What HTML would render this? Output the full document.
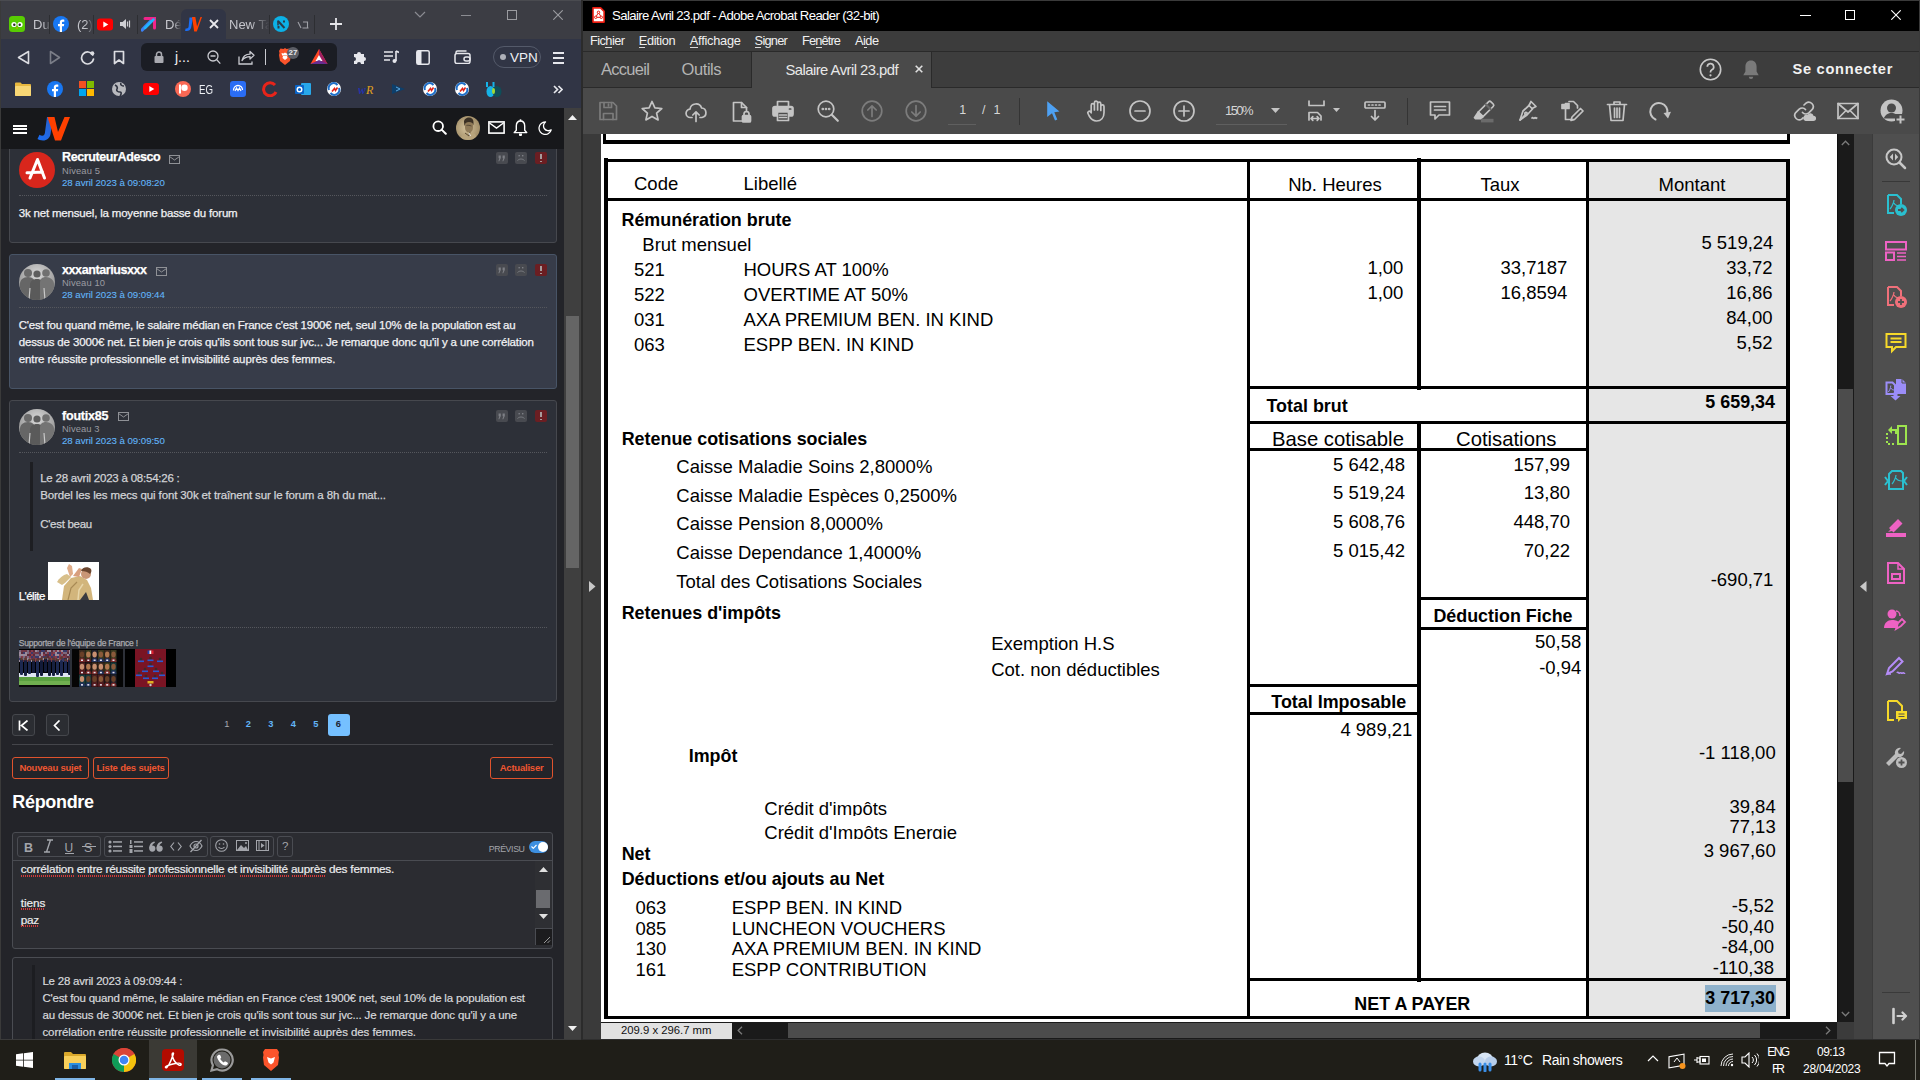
<!DOCTYPE html><html><head><meta charset="utf-8"><style>
html,body{margin:0;padding:0;}
body{width:1920px;height:1080px;overflow:hidden;position:relative;background:#222;font-family:"Liberation Sans",sans-serif;}
div,svg,span{position:absolute;box-sizing:border-box;}
</style></head><body><div style="left:581px;top:0px;width:2px;height:1040px;background:#2b2b2b;"></div>
<div style="left:583px;top:0px;width:1337px;height:31px;background:#000;"></div>
<div style="left:583px;top:31px;width:1337px;height:20px;background:#3c3c3c;"></div>
<div style="left:583px;top:51px;width:1337px;height:1px;background:#2a2a2a;"></div>
<div style="left:583px;top:52px;width:1337px;height:36px;background:#3d3d3d;"></div>
<div style="left:752px;top:52px;width:180px;height:36px;background:#4a4a4a;"></div>
<div style="left:751px;top:52px;width:1px;height:36px;background:#2a2a2a;"></div>
<div style="left:931px;top:52px;width:1px;height:36px;background:#2a2a2a;"></div>
<div style="left:583px;top:87px;width:168px;height:1px;background:#2a2a2a;"></div>
<div style="left:932px;top:87px;width:988px;height:1px;background:#2a2a2a;"></div>
<div style="left:583px;top:88px;width:1337px;height:46px;background:#4a4a4a;"></div>
<div style="left:583px;top:134px;width:18px;height:906px;background:#3a3a3a;"></div>
<svg style="left:592px;top:7px;" width="13" height="16" viewBox="0 0 13 16"><path d="M1 0.9h7.6l3.5 3.5v10.7H1z" fill="#fff" stroke="#ea1c10" stroke-width="1.6" stroke-linejoin="round"/><g fill="none" stroke="#ea1c10" stroke-width="1"><circle cx="6.5" cy="5.3" r="1.2"/><circle cx="3.7" cy="10.3" r="1.2"/><circle cx="9.3" cy="10.3" r="1.2"/><path d="M6 6.4L4.3 9.2M7 6.4l1.7 2.8M4.9 10.3h3.2"/></g></svg>
<div style="left:612px;top:9.13px;font-size:13.2px;line-height:13.2px;color:#fff;font-weight:400;letter-spacing:-0.624px;white-space:pre;">Salaire Avril 23.pdf - Adobe Acrobat Reader (32-bit)</div>
<div style="left:1800px;top:15px;width:11px;height:1px;background:#fff;"></div>
<div style="left:1845px;top:10px;width:10px;height:10px;border:1px solid #fff"></div>
<svg style="left:1891px;top:10px;" width="10" height="10" viewBox="0 0 10 10"><path d="M0.3 0.3L9.7 9.7M9.7 0.3L0.3 9.7" stroke="#fff" stroke-width="1.1"/></svg>
<div style="left:590px;top:35.16px;font-size:12.8px;line-height:12.8px;color:#f0f0f0;font-weight:400;letter-spacing:-0.568px;white-space:pre;">Fichier</div>
<div style="left:638.8px;top:35.16px;font-size:12.8px;line-height:12.8px;color:#f0f0f0;font-weight:400;letter-spacing:-0.39px;white-space:pre;">Edition</div>
<div style="left:689.8px;top:35.16px;font-size:12.8px;line-height:12.8px;color:#f0f0f0;font-weight:400;letter-spacing:-0.242px;white-space:pre;">Affichage</div>
<div style="left:754.6px;top:35.16px;font-size:12.8px;line-height:12.8px;color:#f0f0f0;font-weight:400;letter-spacing:-0.74px;white-space:pre;">Signer</div>
<div style="left:802px;top:35.16px;font-size:12.8px;line-height:12.8px;color:#f0f0f0;font-weight:400;letter-spacing:-0.852px;white-space:pre;">Fenêtre</div>
<div style="left:855px;top:35.16px;font-size:12.8px;line-height:12.8px;color:#f0f0f0;font-weight:400;letter-spacing:-0.54px;white-space:pre;">Aide</div>
<div style="left:605px;top:47px;width:7px;height:1px;background:#d8d8d8;"></div>
<div style="left:639px;top:47px;width:6px;height:1px;background:#d8d8d8;"></div>
<div style="left:690px;top:47px;width:8px;height:1px;background:#d8d8d8;"></div>
<div style="left:755px;top:47px;width:6px;height:1px;background:#d8d8d8;"></div>
<div style="left:816px;top:47px;width:6px;height:1px;background:#d8d8d8;"></div>
<div style="left:864px;top:47px;width:3px;height:1px;background:#d8d8d8;"></div>
<div style="left:601px;top:61.03px;font-size:16.5px;line-height:16.5px;color:#b4b4b4;font-weight:400;letter-spacing:-0.732px;white-space:pre;">Accueil</div>
<div style="left:681.6px;top:61.03px;font-size:16.5px;line-height:16.5px;color:#b4b4b4;font-weight:400;letter-spacing:-0.435px;white-space:pre;">Outils</div>
<div style="left:785.4px;top:62.97px;font-size:14.8px;line-height:14.8px;color:#e8e8e8;font-weight:400;letter-spacing:-0.518px;white-space:pre;">Salaire Avril 23.pdf</div>
<svg style="left:915px;top:65px;" width="8" height="8" viewBox="0 0 8 8"><path d="M0.7 0.7L7.3 7.3M7.3 0.7L0.7 7.3" stroke="#e0e0e0" stroke-width="1.6"/></svg>
<svg style="left:1699px;top:57.5px;" width="23" height="23" viewBox="0 0 23 23"><circle cx="11.5" cy="11.5" r="10.2" fill="none" stroke="#c8c8c8" stroke-width="1.6"/><path d="M8.3 8.8a3.2 3.2 0 1 1 4.6 2.9c-.9.5-1.4 1-1.4 2.2v.6" fill="none" stroke="#c8c8c8" stroke-width="1.7"/><circle cx="11.5" cy="17.3" r="1.1" fill="#c8c8c8"/></svg>
<svg style="left:1742px;top:59px;" width="18" height="21" viewBox="0 0 18 21"><path d="M9 1.5c-3.6 0-5.6 2.6-5.6 6.2v4.8L1.3 16.2h15.4l-2.1-3.7V7.7C14.6 4.1 12.6 1.5 9 1.5z" fill="#7a7a7a"/><path d="M6.8 17.8a2.2 2.2 0 0 0 4.4 0z" fill="#7a7a7a"/></svg>
<div style="left:1792.4px;top:62.24px;font-size:14.6px;line-height:14.6px;color:#f2f2f2;font-weight:700;letter-spacing:0.755px;white-space:pre;">Se connecter</div>
<svg style="left:596.0px;top:99.0px;" width="24" height="24" viewBox="0 0 24 24"><g fill="none" stroke="#7c7c7c" stroke-width="1.7" stroke-linecap="round" stroke-linejoin="round"><path d="M4 3.5h13l3.5 3.5v13.5H4z"/><path d="M8 3.5v5h7.5v-5"/><path d="M12.5 5v2"/><path d="M7.5 20.5v-6h9.5v6"/></g></svg>
<svg style="left:640.0px;top:99.0px;" width="24" height="24" viewBox="0 0 24 24"><g fill="none" stroke="#c4c4c4" stroke-width="1.7" stroke-linecap="round" stroke-linejoin="round"><path d="M12 2.5l2.9 6.3 6.9.7-5.2 4.6 1.5 6.8L12 17.4l-6.1 3.5 1.5-6.8L2.2 9.5l6.9-.7z"/></g></svg>
<svg style="left:684.0px;top:99.5px;" width="24" height="24" viewBox="0 0 24 24"><g fill="none" stroke="#c4c4c4" stroke-width="1.7" stroke-linecap="round" stroke-linejoin="round"><path d="M8 17.5H6.5a4.2 4.2 0 0 1-.5-8.4A6 6 0 0 1 17.6 8a4.8 4.8 0 0 1 .4 9.5H16"/><path d="M12 21.5v-9.5M8.8 15l3.2-3.2 3.2 3.2"/></g></svg>
<svg style="left:728.5px;top:99.5px;" width="24" height="24" viewBox="0 0 24 24"><g fill="none" stroke="#c4c4c4" stroke-width="1.7" stroke-linecap="round" stroke-linejoin="round"><path d="M12.5 21H4.5V2.5h8l5 5v4"/><path d="M12.5 2.5v5h5"/><rect x="13.5" y="15.5" width="8" height="6.5" rx="1" fill="#c4c4c4"/><path d="M15 15.5v-1.5a2.5 2.5 0 0 1 5 0v1.5"/></g></svg>
<svg style="left:771.0px;top:98.5px;" width="24" height="24" viewBox="0 0 24 24"><g fill="none" stroke="#c4c4c4" stroke-width="1.7" stroke-linecap="round" stroke-linejoin="round"><path d="M6.5 7.5V2.5h11v5"/><rect x="2" y="7.5" width="20" height="9.5" rx="2" fill="#c4c4c4"/><rect x="6.5" y="13" width="11" height="8.5" fill="#4b4b4b"/><path d="M8.5 16h7M8.5 18.5h7"/><path d="M18.5 10h1.2" stroke="#4b4b4b"/></g></svg>
<svg style="left:816.0px;top:99.3px;" width="24" height="24" viewBox="0 0 24 24"><g fill="none" stroke="#c4c4c4" stroke-width="1.7" stroke-linecap="round" stroke-linejoin="round"><circle cx="10" cy="10" r="7.8"/><path d="M15.8 15.8l6 6" stroke-width="2.2"/><circle cx="6.8" cy="10" r="0.5" fill="#c4c4c4"/><circle cx="10" cy="10" r="0.5" fill="#c4c4c4"/><circle cx="13.2" cy="10" r="0.5" fill="#c4c4c4"/></g></svg>
<svg style="left:860.0px;top:98.7px;" width="24" height="24" viewBox="0 0 24 24"><g fill="none" stroke="#7c7c7c" stroke-width="1.7" stroke-linecap="round" stroke-linejoin="round"><circle cx="12" cy="12" r="9.8"/><path d="M12 17.5V6.8M7.8 11l4.2-4.2 4.2 4.2"/></g></svg>
<svg style="left:904.0px;top:98.7px;" width="24" height="24" viewBox="0 0 24 24"><g fill="none" stroke="#7c7c7c" stroke-width="1.7" stroke-linecap="round" stroke-linejoin="round"><circle cx="12" cy="12" r="9.8"/><path d="M12 6.5v10.7M7.8 13l4.2 4.2 4.2-4.2"/></g></svg>
<div style="left:959.2px;top:104.32px;font-size:12.5px;line-height:12.5px;color:#d6d6d6;font-weight:400;white-space:pre;">1</div>
<div style="left:948px;top:124px;width:28px;height:1px;background:#5f5f5f;"></div>
<div style="left:982px;top:104.32px;font-size:12.5px;line-height:12.5px;color:#d6d6d6;font-weight:400;white-space:pre;">/</div>
<div style="left:993.5px;top:104.32px;font-size:12.5px;line-height:12.5px;color:#d6d6d6;font-weight:400;white-space:pre;">1</div>
<div style="left:1019px;top:98px;width:1px;height:27px;background:#343434;"></div>
<svg style="left:1046px;top:100px;" width="15" height="22" viewBox="0 0 15 22"><path d="M1.2 1.2L13.5 11.5 8.3 12.2 11.3 19.5 9 20.6 6 13.2 1.2 17z" fill="#4ea1f3"/></svg>
<svg style="left:1084.0px;top:99.0px;" width="24" height="24" viewBox="0 0 24 24"><g fill="none" stroke="#c4c4c4" stroke-width="1.7" stroke-linecap="round" stroke-linejoin="round"><path d="M7.2 13V6.2a1.6 1.6 0 0 1 3.2 0V11M10.4 11V3.8a1.6 1.6 0 0 1 3.2 0V11M13.6 11V4.8a1.6 1.6 0 0 1 3.2 0V11.5M16.8 11.5V7.5a1.6 1.6 0 0 1 3.2 0v6.3c0 5-3 8.2-7.5 8.2-3.7 0-5.4-1.8-7.3-5L4 14.5a1.5 1.5 0 0 1 2.6-1.5l.6.8"/></g></svg>
<svg style="left:1128.0px;top:98.5px;" width="24" height="24" viewBox="0 0 24 24"><g fill="none" stroke="#c4c4c4" stroke-width="1.7" stroke-linecap="round" stroke-linejoin="round"><circle cx="12" cy="12" r="10"/><path d="M7 12h10"/></g></svg>
<svg style="left:1172.0px;top:98.5px;" width="24" height="24" viewBox="0 0 24 24"><g fill="none" stroke="#c4c4c4" stroke-width="1.7" stroke-linecap="round" stroke-linejoin="round"><circle cx="12" cy="12" r="10"/><path d="M7 12h10M12 7v10"/></g></svg>
<div style="left:1225px;top:103.90px;font-size:13px;line-height:13px;color:#d6d6d6;font-weight:400;letter-spacing:-1.549px;white-space:pre;">150%</div>
<svg style="left:1271px;top:108px;" width="9" height="5" viewBox="0 0 9 5"><path d="M0 0h9L4.5 5z" fill="#c4c4c4"/></svg>
<div style="left:1216px;top:124px;width:71px;height:1px;background:#5f5f5f;"></div>
<svg style="left:1306.0px;top:99.0px;" width="24" height="24" viewBox="0 0 24 24"><g fill="none" stroke="#c4c4c4" stroke-width="1.7" stroke-linecap="round" stroke-linejoin="round"><path d="M3 2v4.5h15V2"/><path d="M3 21v-7.5h8.5l3.5 3.5v4"/><path d="M5 19.5h8M6.8 17.7l-1.8 1.8 1.8 1.8M11.2 17.7l1.8 1.8-1.8 1.8"/></g></svg>
<svg style="left:1333px;top:108px;" width="7" height="4" viewBox="0 0 7 4"><path d="M0 0h7L3.5 4z" fill="#c4c4c4"/></svg>
<svg style="left:1363.0px;top:99.0px;" width="24" height="24" viewBox="0 0 24 24"><g fill="none" stroke="#c4c4c4" stroke-width="1.7" stroke-linecap="round" stroke-linejoin="round"><rect x="2" y="3" width="20" height="6" rx="1"/><path d="M5.5 6h1M9 6h1M12.5 6h1M16 6h1"/><path d="M12 11.5v9.5M8.5 17.5l3.5 3.5 3.5-3.5"/></g></svg>
<div style="left:1407px;top:98px;width:1px;height:27px;background:#343434;"></div>
<svg style="left:1428.0px;top:99.0px;" width="24" height="24" viewBox="0 0 24 24"><g fill="none" stroke="#c4c4c4" stroke-width="1.7" stroke-linecap="round" stroke-linejoin="round"><path d="M2.5 3h19v13H11l-4 4v-4H2.5z"/><path d="M6.5 7.5h11M6.5 11h11"/></g></svg>
<svg style="left:1471.5px;top:99.0px;" width="24" height="24" viewBox="0 0 24 24"><g fill="none" stroke="#c4c4c4" stroke-width="1.7" stroke-linecap="round" stroke-linejoin="round"><path d="M16.5 2.8a1.8 1.8 0 0 1 2.5 0l2.2 2.2a1.8 1.8 0 0 1 0 2.5L11 17.7 6.3 13z"/><path d="M6.3 13l4.7 4.7-2 2H3.5l-1-1z" fill="#c4c4c4"/><rect x="9" y="19.8" width="12.5" height="3.6" fill="#6b6b6b" stroke="none"/><path d="M14 5.5l4.5 4.5" stroke="#6b6b6b" stroke-width="2.2"/></g></svg>
<svg style="left:1515.5px;top:98.5px;" width="24" height="24" viewBox="0 0 24 24"><g fill="none" stroke="#c4c4c4" stroke-width="1.7" stroke-linecap="round" stroke-linejoin="round"><path d="M4 21l3-9 6-5.5 3.5 3.5-5.5 6z"/><path d="M13 6.5l2-4 5 5-4 2"/><path d="M4 21l5-5"/><circle cx="10" cy="14.5" r="1.2"/><path d="M16 19c1-1.5 1.5 1.5 2.5 0s1.2 1.2 2.2 0"/></g></svg>
<svg style="left:1560.0px;top:99.3px;" width="24" height="24" viewBox="0 0 24 24"><g fill="none" stroke="#c4c4c4" stroke-width="1.7" stroke-linecap="round" stroke-linejoin="round"><path d="M9 4.5H5.5v16h8"/><path d="M9 2.5h4.5l4 4V9"/><rect x="2" y="5.5" width="7" height="4" fill="#c4c4c4"/><path d="M11 21.5l1-3.5 8.5-8.5 2.5 2.5-8.5 8.5z"/></g></svg>
<svg style="left:1604.7px;top:99.0px;" width="24" height="24" viewBox="0 0 24 24"><g fill="none" stroke="#c4c4c4" stroke-width="1.7" stroke-linecap="round" stroke-linejoin="round"><path d="M2.5 5.5h19M9 5.5V3h6v2.5M4.5 5.5l1.5 16h12l1.5-16M9.5 9v9.5M12 9v9.5M14.5 9v9.5"/></g></svg>
<svg style="left:1648.0px;top:99.0px;" width="24" height="24" viewBox="0 0 24 24"><g fill="none" stroke="#c4c4c4" stroke-width="2" stroke-linecap="round" stroke-linejoin="round"><path d="M7.5 20.5A8.6 8.6 0 1 1 19.3 14.5"/><path d="M15.5 14l7.5-1.2-3 6.7z" fill="#c4c4c4" stroke="none"/></g></svg>
<svg style="left:1792.0px;top:99.0px;" width="24" height="24" viewBox="0 0 24 24"><g fill="none" stroke="#c4c4c4" stroke-width="1.7" stroke-linecap="round" stroke-linejoin="round"><path d="M10.5 13.5a4.5 4.5 0 0 0 6.3.4l3.5-3.5a4.5 4.5 0 0 0-6.3-6.3L12 6"/><path d="M13.5 10.5a4.5 4.5 0 0 0-6.3-.4l-3.5 3.5a4.5 4.5 0 0 0 6.3 6.3l1-1"/><path d="M13.5 22h8a2.6 2.6 0 0 0 0-5.2 3.2 3.2 0 0 0-6-.8 2.4 2.4 0 0 0-2 6z" fill="#c4c4c4" stroke="none"/></g></svg>
<svg style="left:1836.0px;top:98.6px;" width="24" height="24" viewBox="0 0 24 24"><g fill="none" stroke="#c4c4c4" stroke-width="1.7" stroke-linecap="round" stroke-linejoin="round"><rect x="2" y="4.5" width="20" height="15"/><path d="M2 4.5l10 8.5 10-8.5M2 19.5l7.5-7.5M22 19.5l-7.5-7.5"/></g></svg>
<svg style="left:1880px;top:99px;" width="26" height="25" viewBox="0 0 26 25"><circle cx="11.5" cy="11.5" r="11" fill="#c4c4c4"/><circle cx="11.5" cy="9" r="4.5" fill="#4b4b4b"/><path d="M3.8 19.5c1.5-4 4.5-5.5 7.7-5.5s6.2 1.5 7.7 5.5" fill="#4b4b4b"/><rect x="15" y="15" width="11" height="10" fill="#4b4b4b"/><path d="M20.5 16.5v8M16.5 20.5h8" stroke="#c4c4c4" stroke-width="2"/></svg>
<div style="left:1837px;top:134px;width:17px;height:888px;background:#1a1a1a;"></div>
<div style="left:1837px;top:134px;width:1px;height:888px;background:#0f0f0f;"></div>
<div style="left:1838px;top:389px;width:15px;height:393px;background:#4c4c4c;"></div>
<svg style="left:1841px;top:140px;" width="9" height="6" viewBox="0 0 9 6"><path d="M0.8 5L4.5 1.2 8.2 5" fill="none" stroke="#7a7a7a" stroke-width="1.3"/></svg>
<svg style="left:1841px;top:1011px;" width="9" height="6" viewBox="0 0 9 6"><path d="M0.8 1L4.5 4.8 8.2 1" fill="none" stroke="#7a7a7a" stroke-width="1.3"/></svg>
<div style="left:601px;top:1022px;width:1236px;height:18px;background:#1a1a1a;"></div>
<div style="left:601px;top:1023px;width:131px;height:16px;background:#e1e1e1;"></div>
<div style="left:621px;top:1025.43px;font-size:11.3px;line-height:11.3px;color:#111;font-weight:400;white-space:pre;">209.9 x 296.7 mm</div>
<div style="left:788px;top:1023px;width:972px;height:15px;background:#4c4c4c;"></div>
<svg style="left:737px;top:1026px;" width="6" height="9" viewBox="0 0 6 9"><path d="M5 0.8L1.2 4.5 5 8.2" fill="none" stroke="#7a7a7a" stroke-width="1.3"/></svg>
<svg style="left:1825px;top:1026px;" width="6" height="9" viewBox="0 0 6 9"><path d="M1 0.8L4.8 4.5 1 8.2" fill="none" stroke="#7a7a7a" stroke-width="1.3"/></svg>
<div style="left:1837px;top:1022px;width:17px;height:18px;background:#3b3b3b;"></div>
<div style="left:1854px;top:134px;width:18px;height:906px;background:#424242;"></div>
<div style="left:1872px;top:134px;width:1px;height:906px;background:#3b3b3b;"></div>
<div style="left:1873px;top:134px;width:47px;height:906px;background:#4f4f4f;"></div>
<div style="left:583px;top:1039px;width:1337px;height:1px;background:#2e2e2e;"></div>
<svg style="left:589px;top:581px;" width="7" height="11" viewBox="0 0 7 11"><path d="M0 0v11L6.5 5.5z" fill="#c8c8c8"/></svg>
<svg style="left:1860px;top:581px;" width="7" height="11" viewBox="0 0 7 11"><path d="M6.5 0v11L0 5.5z" fill="#c8c8c8"/></svg>
<svg style="left:1884px;top:147px;" width="24" height="24" viewBox="0 0 24 24"><circle cx="10" cy="10" r="7.5" fill="none" stroke="#c8c8c8" stroke-width="2"/><path d="M15.5 15.5l5.5 5.5" stroke="#c8c8c8" stroke-width="2.5" stroke-linecap="round"/><path d="M9 6.5v7L5.8 10zM11 6.5v7L14.2 10z" fill="#c8c8c8"/></svg>
<div style="left:1882px;top:181px;width:28px;height:1px;background:#383838;"></div>
<svg style="left:1884px;top:193px;" width="24" height="24" viewBox="0 0 24 24"><path d="M4 2h9l4 4v5" fill="none" stroke="#2ac0d0" stroke-width="2"/><path d="M10 20H4V2" fill="none" stroke="#2ac0d0" stroke-width="2"/><path d="M10 7c0 3-3 8-4 9M10 10c1 2 3 3 6 3" fill="none" stroke="#2ac0d0" stroke-width="1.2"/><circle cx="17" cy="17" r="6" fill="#2ac0d0"/><path d="M14 17h5M17.2 14.8l2.2 2.2-2.2 2.2" stroke="#505050" stroke-width="1.8" fill="none"/></svg>
<svg style="left:1884px;top:239px;" width="24" height="24" viewBox="0 0 24 24"><rect x="2" y="3" width="20" height="7.5" fill="none" stroke="#ee62c4" stroke-width="2"/><rect x="2" y="13.5" width="8" height="7.5" fill="none" stroke="#ee62c4" stroke-width="2"/><path d="M13 14h9M13 17.5h9M13 21h9" stroke="#ee62c4" stroke-width="1.3"/></svg>
<svg style="left:1884px;top:285px;" width="24" height="24" viewBox="0 0 24 24"><path d="M4 2h9l4 4v5" fill="none" stroke="#f0707a" stroke-width="2"/><path d="M10 20H4V2" fill="none" stroke="#f0707a" stroke-width="2"/><path d="M10 7c0 3-3 8-4 9M10 10c1 2 3 3 6 3" fill="none" stroke="#f0707a" stroke-width="1.2"/><circle cx="17" cy="17" r="6" fill="#f0707a"/><path d="M14 17h6M17 14v6" stroke="#505050" stroke-width="1.8"/></svg>
<svg style="left:1884px;top:331px;" width="24" height="24" viewBox="0 0 24 24"><path d="M2.5 3h19v13H12l-4 4v-4H2.5z" fill="none" stroke="#f6d92a" stroke-width="2"/><path d="M6.5 7.5h11M6.5 11h11" stroke="#f6d92a" stroke-width="1.8"/></svg>
<svg style="left:1884px;top:377px;" width="24" height="24" viewBox="0 0 24 24"><path d="M2.5 5.5h6l2.5 2.5v9H2.5z" fill="none" stroke="#9b8df8" stroke-width="2"/><path d="M12 2h6l4 4v11h-10z" fill="#9b8df8"/><path d="M18 2v4h4" fill="none" stroke="#4f4f4f" stroke-width="1"/><path d="M9.5 15.5h4v3.5h3l-5 4.5-5-4.5h3z" fill="#9b8df8"/><path d="M6.8 8.5c0 2.5-1.5 5.5-2.5 6.5M6.8 11c.8 1.5 2 2 3.5 2" fill="none" stroke="#9b8df8" stroke-width="1"/></svg>
<svg style="left:1884px;top:423px;" width="24" height="24" viewBox="0 0 24 24"><path d="M14 3h8v18h-8z" fill="none" stroke="#9ee54e" stroke-width="2"/><path d="M3 10v11h7M3 14v2" fill="none" stroke="#9ee54e" stroke-width="2" stroke-dasharray="2 2"/><path d="M4 7l4-4v8z" fill="#9ee54e"/><path d="M6 7h6v4" fill="none" stroke="#9ee54e" stroke-width="2"/></svg>
<svg style="left:1884px;top:469px;" width="24" height="24" viewBox="0 0 24 24"><path d="M5 5l3-3h9l2 2v16H5z" fill="none" stroke="#2ac0d0" stroke-width="2"/><path d="M1 8l3 4-3 4M23 8l-3 4 3 4" fill="none" stroke="#2ac0d0" stroke-width="2"/><path d="M12 6c0 3-3 8-4 9M12 9c1 2 3 3 6 3" fill="none" stroke="#2ac0d0" stroke-width="1.2"/></svg>
<svg style="left:1884px;top:515px;" width="24" height="24" viewBox="0 0 24 24"><path d="M4 17l2.5-2.5-1.5-1.5L14 4l4.5 4.5-9 9-1.5-1.5z" fill="#ee62c4"/><rect x="2" y="18" width="20" height="4" fill="#ee62c4"/></svg>
<svg style="left:1884px;top:561px;" width="24" height="24" viewBox="0 0 24 24"><path d="M4 2h10l6 6v14H4z" fill="none" stroke="#ee62c4" stroke-width="2"/><path d="M14 2v6h6" fill="none" stroke="#ee62c4" stroke-width="1.5"/><rect x="8" y="13" width="8" height="5" fill="none" stroke="#ee62c4" stroke-width="2"/></svg>
<svg style="left:1884px;top:607px;" width="24" height="24" viewBox="0 0 24 24"><circle cx="8" cy="7" r="4.5" fill="#ee62c4"/><path d="M0 21c0-5 3.5-8 8-8s6 1.5 6 1.5V21z" fill="#ee62c4"/><path d="M12 22l2-6 4-4 3 3-4 4z" fill="none" stroke="#ee62c4" stroke-width="1.8"/><path d="M12 4c2 0 4 2 4 5" fill="none" stroke="#ee62c4" stroke-width="1.5"/></svg>
<svg style="left:1884px;top:653px;" width="24" height="24" viewBox="0 0 24 24"><path d="M3 21l2-6 10-10 3.5 3.5-10 10z" fill="none" stroke="#b58cf8" stroke-width="2"/><path d="M3 21h4M13 20c1-2 2 1 3 0s1.5 1 2.5 0 1.5 1 2.5 0" fill="none" stroke="#b58cf8" stroke-width="1.6"/></svg>
<svg style="left:1884px;top:699px;" width="24" height="24" viewBox="0 0 24 24"><path d="M4 2h9l5 5v5" fill="none" stroke="#f6d92a" stroke-width="2"/><path d="M10 21H4V2" fill="none" stroke="#f6d92a" stroke-width="2"/><path d="M12 12h11v8h-6l-3 3v-3h-2z" fill="#f6d92a"/><path d="M14.5 15h6M14.5 17.5h6" stroke="#505050" stroke-width="1"/></svg>
<svg style="left:1884px;top:745px;" width="24" height="24" viewBox="0 0 24 24"><path d="M2 18l9-9a5 5 0 0 1 6-6l-3 3 .5 2.5L17 9l3-3a5 5 0 0 1-6 6l-9 9z" fill="#bdbdbd"/><circle cx="17.5" cy="17.5" r="5.5" fill="#bdbdbd"/><path d="M14.5 17.5h6M17.5 14.5v6" stroke="#505050" stroke-width="1.8"/></svg>
<div style="left:1882px;top:992px;width:28px;height:1px;background:#3a3a3a;"></div>
<svg style="left:1891px;top:1007px;" width="17" height="18" viewBox="0 0 17 18"><path d="M2.5 2v14" stroke="#d0d0d0" stroke-width="2.6" stroke-linecap="round"/><path d="M6.5 9h8M11.5 5.5L15 9l-3.5 3.5" fill="none" stroke="#d0d0d0" stroke-width="2.2" stroke-linecap="round" stroke-linejoin="round"/></svg>
<div style="left:583px;top:0px;width:1337px;height:1px;background:#3a3a3a;"></div>
<div style="left:1919px;top:0px;width:1px;height:1040px;background:#3a3a3a;"></div>
<div style="left:601px;top:134px;width:1236px;height:888px;background:#fff;"></div>
<div style="left:603px;top:134px;width:3px;height:9px;background:#000;"></div>
<div style="left:1787px;top:134px;width:3px;height:9px;background:#000;"></div>
<div style="left:603px;top:140px;width:1187px;height:3.5px;background:#000;"></div>
<div style="left:1589px;top:162px;width:197px;height:854px;background:#e6e6e6;"></div>
<div style="left:604px;top:159px;width:1186px;height:3px;background:#000;"></div>
<div style="left:604px;top:158px;width:4px;height:861px;background:#000;"></div>
<div style="left:604px;top:198px;width:1186px;height:3px;background:#000;"></div>
<div style="left:1786px;top:159px;width:4px;height:860px;background:#000;"></div>
<div style="left:1247px;top:159px;width:3px;height:860px;background:#000;"></div>
<div style="left:1417px;top:158px;width:4px;height:232px;background:#000;"></div>
<div style="left:1586px;top:159px;width:3px;height:860px;background:#000;"></div>
<div style="left:1250px;top:386px;width:540px;height:3px;background:#000;"></div>
<div style="left:1250px;top:421px;width:540px;height:3px;background:#000;"></div>
<div style="left:1250px;top:448px;width:336px;height:3px;background:#000;"></div>
<div style="left:1417px;top:422px;width:4px;height:560px;background:#000;"></div>
<div style="left:1420px;top:597px;width:166px;height:3px;background:#000;"></div>
<div style="left:1420px;top:627px;width:166px;height:3px;background:#000;"></div>
<div style="left:1250px;top:684px;width:167px;height:3px;background:#000;"></div>
<div style="left:1250px;top:712px;width:167px;height:3px;background:#000;"></div>
<div style="left:1250px;top:978px;width:540px;height:3px;background:#000;"></div>
<div style="left:604px;top:1016px;width:1186px;height:3px;background:#000;"></div>
<div style="left:1705px;top:985px;width:71px;height:27px;background:#8eb1cb;"></div>
<div style="left:634px;top:175.24px;font-size:18.5px;line-height:18.5px;color:#000;font-weight:400;white-space:pre;">Code</div>
<div style="left:743.5px;top:175.24px;font-size:18.5px;line-height:18.5px;color:#000;font-weight:400;white-space:pre;">Libellé</div>
<div style="left:642.3px;top:235.64px;font-size:18.5px;line-height:18.5px;color:#000;font-weight:400;white-space:pre;">Brut mensuel</div>
<div style="left:634px;top:261.04px;font-size:18.5px;line-height:18.5px;color:#000;font-weight:400;white-space:pre;">521</div>
<div style="left:743.5px;top:261.04px;font-size:18.5px;line-height:18.5px;color:#000;font-weight:400;white-space:pre;">HOURS AT 100%</div>
<div style="left:634px;top:286.24px;font-size:18.5px;line-height:18.5px;color:#000;font-weight:400;white-space:pre;">522</div>
<div style="left:743.5px;top:286.24px;font-size:18.5px;line-height:18.5px;color:#000;font-weight:400;white-space:pre;">OVERTIME AT 50%</div>
<div style="left:634px;top:311.24px;font-size:18.5px;line-height:18.5px;color:#000;font-weight:400;white-space:pre;">031</div>
<div style="left:743.5px;top:311.24px;font-size:18.5px;line-height:18.5px;color:#000;font-weight:400;white-space:pre;">AXA PREMIUM BEN. IN KIND</div>
<div style="left:634px;top:336.24px;font-size:18.5px;line-height:18.5px;color:#000;font-weight:400;white-space:pre;">063</div>
<div style="left:743.5px;top:336.24px;font-size:18.5px;line-height:18.5px;color:#000;font-weight:400;white-space:pre;">ESPP BEN. IN KIND</div>
<div style="left:676.3px;top:457.74px;font-size:18.5px;line-height:18.5px;color:#000;font-weight:400;white-space:pre;">Caisse Maladie Soins 2,8000%</div>
<div style="left:676.3px;top:487.04px;font-size:18.5px;line-height:18.5px;color:#000;font-weight:400;white-space:pre;">Caisse Maladie Espèces 0,2500%</div>
<div style="left:676.3px;top:515.24px;font-size:18.5px;line-height:18.5px;color:#000;font-weight:400;white-space:pre;">Caisse Pension 8,0000%</div>
<div style="left:676.3px;top:544.44px;font-size:18.5px;line-height:18.5px;color:#000;font-weight:400;white-space:pre;">Caisse Dependance 1,4000%</div>
<div style="left:676.3px;top:573.04px;font-size:18.5px;line-height:18.5px;color:#000;font-weight:400;white-space:pre;">Total des Cotisations Sociales</div>
<div style="left:991.2px;top:634.84px;font-size:18.5px;line-height:18.5px;color:#000;font-weight:400;white-space:pre;">Exemption H.S</div>
<div style="left:991.2px;top:661.24px;font-size:18.5px;line-height:18.5px;color:#000;font-weight:400;white-space:pre;">Cot. non déductibles</div>
<div style="left:635.4px;top:898.74px;font-size:18.5px;line-height:18.5px;color:#000;font-weight:400;white-space:pre;">063</div>
<div style="left:731.7px;top:898.74px;font-size:18.5px;line-height:18.5px;color:#000;font-weight:400;white-space:pre;">ESPP BEN. IN KIND</div>
<div style="left:635.4px;top:920.04px;font-size:18.5px;line-height:18.5px;color:#000;font-weight:400;white-space:pre;">085</div>
<div style="left:731.7px;top:920.04px;font-size:18.5px;line-height:18.5px;color:#000;font-weight:400;white-space:pre;">LUNCHEON VOUCHERS</div>
<div style="left:635.4px;top:940.04px;font-size:18.5px;line-height:18.5px;color:#000;font-weight:400;white-space:pre;">130</div>
<div style="left:731.7px;top:940.04px;font-size:18.5px;line-height:18.5px;color:#000;font-weight:400;white-space:pre;">AXA PREMIUM BEN. IN KIND</div>
<div style="left:635.4px;top:961.34px;font-size:18.5px;line-height:18.5px;color:#000;font-weight:400;white-space:pre;">161</div>
<div style="left:731.7px;top:961.34px;font-size:18.5px;line-height:18.5px;color:#000;font-weight:400;white-space:pre;">ESPP CONTRIBUTION</div>
<div style="left:621.5px;top:211.75px;font-size:17.9px;line-height:17.9px;color:#000;font-weight:700;white-space:pre;">Rémunération brute</div>
<div style="left:621.7px;top:430.55px;font-size:17.9px;line-height:17.9px;color:#000;font-weight:700;white-space:pre;">Retenue cotisations sociales</div>
<div style="left:621.7px;top:605.25px;font-size:17.9px;line-height:17.9px;color:#000;font-weight:700;white-space:pre;">Retenues d'impôts</div>
<div style="left:688.7px;top:747.75px;font-size:17.9px;line-height:17.9px;color:#000;font-weight:700;white-space:pre;">Impôt</div>
<div style="left:621.7px;top:845.75px;font-size:17.9px;line-height:17.9px;color:#000;font-weight:700;white-space:pre;">Net</div>
<div style="left:621.7px;top:871.45px;font-size:17.9px;line-height:17.9px;color:#000;font-weight:700;white-space:pre;">Déductions et/ou ajouts au Net</div>
<div style="left:1266.5px;top:398.25px;font-size:17.9px;line-height:17.9px;color:#000;font-weight:700;white-space:pre;">Total brut</div>
<div style="left:1433.4px;top:608.25px;font-size:17.9px;line-height:17.9px;color:#000;font-weight:700;white-space:pre;">Déduction Fiche</div>
<div style="left:1271.3px;top:694.05px;font-size:17.9px;line-height:17.9px;color:#000;font-weight:700;white-space:pre;">Total Imposable</div>
<div style="left:1354.3px;top:996.35px;font-size:17.9px;line-height:17.9px;color:#000;font-weight:700;white-space:pre;">NET A PAYER</div>
<div style="left:700px;top:790px;width:500px;height:26px;overflow:hidden">
<div style="left:64.3px;top:9.74px;font-size:18.5px;line-height:18.5px;color:#000;font-weight:400;white-space:pre;">Crédit d'impôts</div>
</div>
<div style="left:700px;top:818px;width:500px;height:21px;overflow:hidden">
<div style="left:64.3px;top:5.84px;font-size:18.5px;line-height:18.5px;color:#000;font-weight:400;white-space:pre;">Crédit d'Impôts Energie</div>
</div>
<div style="left:585px;width:1500px;text-align:center;top:175.64px;font-size:18.5px;line-height:18.5px;color:#000;font-weight:400;white-space:pre;">Nb. Heures</div>
<div style="left:750px;width:1500px;text-align:center;top:175.64px;font-size:18.5px;line-height:18.5px;color:#000;font-weight:400;white-space:pre;">Taux</div>
<div style="left:942px;width:1500px;text-align:center;top:175.64px;font-size:18.5px;line-height:18.5px;color:#000;font-weight:400;white-space:pre;">Montant</div>
<div style="left:1272px;top:428.92px;font-size:20.3px;line-height:20.3px;color:#000;font-weight:400;white-space:pre;">Base cotisable</div>
<div style="left:1456px;top:428.72px;font-size:20.3px;line-height:20.3px;color:#000;font-weight:400;white-space:pre;">Cotisations</div>
<div style="left:273.4000000000001px;width:1500px;text-align:right;top:234.04px;font-size:18.5px;line-height:18.5px;color:#000;font-weight:400;white-space:pre;">5 519,24</div>
<div style="left:-96.59999999999991px;width:1500px;text-align:right;top:258.94px;font-size:18.5px;line-height:18.5px;color:#000;font-weight:400;white-space:pre;">1,00</div>
<div style="left:67.40000000000009px;width:1500px;text-align:right;top:258.94px;font-size:18.5px;line-height:18.5px;color:#000;font-weight:400;white-space:pre;">33,7187</div>
<div style="left:272.5px;width:1500px;text-align:right;top:258.94px;font-size:18.5px;line-height:18.5px;color:#000;font-weight:400;white-space:pre;">33,72</div>
<div style="left:-96.59999999999991px;width:1500px;text-align:right;top:283.74px;font-size:18.5px;line-height:18.5px;color:#000;font-weight:400;white-space:pre;">1,00</div>
<div style="left:67.40000000000009px;width:1500px;text-align:right;top:283.74px;font-size:18.5px;line-height:18.5px;color:#000;font-weight:400;white-space:pre;">16,8594</div>
<div style="left:272.5px;width:1500px;text-align:right;top:283.74px;font-size:18.5px;line-height:18.5px;color:#000;font-weight:400;white-space:pre;">16,86</div>
<div style="left:272.5px;width:1500px;text-align:right;top:308.94px;font-size:18.5px;line-height:18.5px;color:#000;font-weight:400;white-space:pre;">84,00</div>
<div style="left:272.5px;width:1500px;text-align:right;top:334.24px;font-size:18.5px;line-height:18.5px;color:#000;font-weight:400;white-space:pre;">5,52</div>
<div style="left:-95px;width:1500px;text-align:right;top:455.94px;font-size:18.5px;line-height:18.5px;color:#000;font-weight:400;white-space:pre;">5 642,48</div>
<div style="left:70px;width:1500px;text-align:right;top:455.94px;font-size:18.5px;line-height:18.5px;color:#000;font-weight:400;white-space:pre;">157,99</div>
<div style="left:-95px;width:1500px;text-align:right;top:484.34px;font-size:18.5px;line-height:18.5px;color:#000;font-weight:400;white-space:pre;">5 519,24</div>
<div style="left:70px;width:1500px;text-align:right;top:484.34px;font-size:18.5px;line-height:18.5px;color:#000;font-weight:400;white-space:pre;">13,80</div>
<div style="left:-95px;width:1500px;text-align:right;top:513.44px;font-size:18.5px;line-height:18.5px;color:#000;font-weight:400;white-space:pre;">5 608,76</div>
<div style="left:70px;width:1500px;text-align:right;top:513.44px;font-size:18.5px;line-height:18.5px;color:#000;font-weight:400;white-space:pre;">448,70</div>
<div style="left:-95px;width:1500px;text-align:right;top:541.54px;font-size:18.5px;line-height:18.5px;color:#000;font-weight:400;white-space:pre;">5 015,42</div>
<div style="left:70px;width:1500px;text-align:right;top:541.54px;font-size:18.5px;line-height:18.5px;color:#000;font-weight:400;white-space:pre;">70,22</div>
<div style="left:273.4000000000001px;width:1500px;text-align:right;top:570.54px;font-size:18.5px;line-height:18.5px;color:#000;font-weight:400;white-space:pre;">-690,71</div>
<div style="left:81.29999999999995px;width:1500px;text-align:right;top:632.84px;font-size:18.5px;line-height:18.5px;color:#000;font-weight:400;white-space:pre;">50,58</div>
<div style="left:81.29999999999995px;width:1500px;text-align:right;top:659.24px;font-size:18.5px;line-height:18.5px;color:#000;font-weight:400;white-space:pre;">-0,94</div>
<div style="left:-87.59999999999991px;width:1500px;text-align:right;top:721.04px;font-size:18.5px;line-height:18.5px;color:#000;font-weight:400;white-space:pre;">4 989,21</div>
<div style="left:275.70000000000005px;width:1500px;text-align:right;top:743.94px;font-size:18.5px;line-height:18.5px;color:#000;font-weight:400;white-space:pre;">-1 118,00</div>
<div style="left:275.70000000000005px;width:1500px;text-align:right;top:797.94px;font-size:18.5px;line-height:18.5px;color:#000;font-weight:400;white-space:pre;">39,84</div>
<div style="left:275.70000000000005px;width:1500px;text-align:right;top:818.24px;font-size:18.5px;line-height:18.5px;color:#000;font-weight:400;white-space:pre;">77,13</div>
<div style="left:275.70000000000005px;width:1500px;text-align:right;top:841.84px;font-size:18.5px;line-height:18.5px;color:#000;font-weight:400;white-space:pre;">3 967,60</div>
<div style="left:274px;width:1500px;text-align:right;top:897.24px;font-size:18.5px;line-height:18.5px;color:#000;font-weight:400;white-space:pre;">-5,52</div>
<div style="left:274px;width:1500px;text-align:right;top:917.74px;font-size:18.5px;line-height:18.5px;color:#000;font-weight:400;white-space:pre;">-50,40</div>
<div style="left:274px;width:1500px;text-align:right;top:938.24px;font-size:18.5px;line-height:18.5px;color:#000;font-weight:400;white-space:pre;">-84,00</div>
<div style="left:274px;width:1500px;text-align:right;top:958.74px;font-size:18.5px;line-height:18.5px;color:#000;font-weight:400;white-space:pre;">-110,38</div>
<div style="left:275px;width:1500px;text-align:right;top:394.05px;font-size:17.9px;line-height:17.9px;color:#000;font-weight:700;white-space:pre;">5 659,34</div>
<div style="left:275px;width:1500px;text-align:right;top:989.75px;font-size:17.9px;line-height:17.9px;color:#000;font-weight:700;white-space:pre;">3 717,30</div>
<div style="left:0px;top:0px;width:581px;height:39px;background:#3c3d44;"></div>
<div style="left:0px;top:39px;width:581px;height:69px;background:#313545;"></div>
<div style="left:0px;top:0px;width:1px;height:1040px;background:#3a3a3a;"></div>
<div style="left:0px;top:0px;width:581px;height:1px;background:#4a4b50;"></div>
<div style="left:181px;top:9px;width:45px;height:31px;background:#313545;border-radius:6px 6px 0 0"></div>
<div style="left:49px;top:15px;width:1px;height:19px;background:#2d2e32;"></div>
<div style="left:93px;top:15px;width:1px;height:19px;background:#2d2e32;"></div>
<div style="left:137px;top:15px;width:1px;height:19px;background:#2d2e32;"></div>
<div style="left:269px;top:15px;width:1px;height:19px;background:#2d2e32;"></div>
<div style="left:314px;top:15px;width:1px;height:19px;background:#2d2e32;"></div>
<svg style="left:9px;top:16px;" width="16" height="16" viewBox="0 0 16 16"><rect width="16" height="16" rx="3.5" fill="#58cc02"/><circle cx="5" cy="8.5" r="2.6" fill="#fff"/><circle cx="11" cy="8.5" r="2.6" fill="#fff"/><circle cx="5.3" cy="8.8" r="1.2" fill="#2b2b2b"/><circle cx="10.7" cy="8.8" r="1.2" fill="#2b2b2b"/><path d="M7 11.5h2l-1 1.5z" fill="#ff9600"/></svg>
<svg style="left:53px;top:16px;" width="16" height="16" viewBox="0 0 16 16"><circle cx="8" cy="8" r="8" fill="#1877f2"/><path d="M9 16V10.3h1.9l.3-2.2H9V6.7c0-.6.2-1 1.1-1h1.2V3.7c-.2 0-.9-.1-1.7-.1-1.7 0-2.8 1-2.8 2.9v1.6H5v2.2h1.8V16z" fill="#fff"/></svg>
<svg style="left:97px;top:18px;" width="16" height="13" viewBox="0 0 16 13"><rect width="16" height="12" y="0.5" rx="3" fill="#ff0000"/><path d="M6.3 3.5v6l5-3z" fill="#fff"/></svg>
<svg style="left:120px;top:19px;" width="11" height="10" viewBox="0 0 11 10"><path d="M0 3h2.5L6 0v10L2.5 7H0z" fill="#d0d0d4"/><path d="M7.5 2.5v5M9.5 1.5v7" stroke="#d0d0d4" stroke-width="1.2"/></svg>
<svg style="left:141px;top:16px;" width="16" height="16" viewBox="0 0 16 16"><path d="M1 14L12 3" stroke="#3b82f6" stroke-width="3.2" stroke-linecap="round"/><path d="M4 2.5h9.5V12" fill="none" stroke="#f0248a" stroke-width="3" stroke-linecap="round"/><path d="M4 12L12.5 3.5" stroke="#1fb6ff" stroke-width="2.5" stroke-linecap="round"/></svg>
<svg style="left:185px;top:16px;" width="17" height="16" viewBox="0 0 17 16"><path d="M4.5 1.5h3.5l-1.8 10c-.5 2.5-2.5 3.5-4.5 3.5-.7 0-1.5-.2-1.7-.3l.8-2.4c.3.1.6.2 1 .2.9 0 1.6-.6 1.8-1.7z" fill="#1a6ef5"/><path d="M7 1h3.3l1.8 9.5L15.5 1H17l-5.2 14.5H9.2z" fill="#ff4000"/></svg>
<svg style="left:209px;top:19px;" width="10" height="10" viewBox="0 0 10 10"><path d="M1 1l8 8M9 1L1 9" stroke="#e8e8ec" stroke-width="1.8"/></svg>
<svg style="left:273px;top:16px;" width="16" height="16" viewBox="0 0 16 16"><circle cx="8" cy="8" r="8" fill="#0cb1e6"/><path d="M5 5l6.5 7" stroke="#2a3a48" stroke-width="2"/><rect x="10" y="4.5" width="2" height="2" fill="#2a3a48"/><rect x="4.5" y="10" width="2" height="2.5" fill="#2a3a48"/><path d="M5 4.5v5" stroke="#2a3a48" stroke-width="1.5"/></svg>
<div style="left:33px;top:0;width:18px;height:39px;overflow:hidden;-webkit-mask-image:linear-gradient(90deg,#000 55%,transparent)">
<div style="left:0px;top:18.00px;font-size:13px;line-height:13px;color:#c4c5cb;font-weight:400;white-space:pre;">Du</div>
</div>
<div style="left:77px;top:0;width:16px;height:39px;overflow:hidden;-webkit-mask-image:linear-gradient(90deg,#000 55%,transparent)">
<div style="left:0px;top:18.00px;font-size:13px;line-height:13px;color:#c4c5cb;font-weight:400;white-space:pre;">(2)</div>
</div>
<div style="left:165px;top:0;width:16px;height:39px;overflow:hidden;-webkit-mask-image:linear-gradient(90deg,#000 55%,transparent)">
<div style="left:0px;top:18.00px;font-size:13px;line-height:13px;color:#c4c5cb;font-weight:400;white-space:pre;">Dé</div>
</div>
<div style="left:229px;top:0;width:40px;height:39px;overflow:hidden;-webkit-mask-image:linear-gradient(90deg,#000 55%,transparent)">
<div style="left:0px;top:18.00px;font-size:13px;line-height:13px;color:#c4c5cb;font-weight:400;white-space:pre;">New Ta</div>
</div>
<svg style="left:330px;top:18px;" width="12" height="12" viewBox="0 0 12 12"><path d="M6 0v12M0 6h12" stroke="#e6e6ea" stroke-width="1.8"/></svg>
<svg style="left:414px;top:11px;" width="12" height="7" viewBox="0 0 12 7"><path d="M1 1l5 5 5-5" fill="none" stroke="#8b8c92" stroke-width="1.2"/></svg>
<div style="left:461px;top:15px;width:10px;height:1px;background:#8b8c92;"></div>
<div style="left:507px;top:10px;width:10px;height:10px;border:1px solid #9a9ba0"></div>
<svg style="left:553px;top:10px;" width="10" height="10" viewBox="0 0 10 10"><path d="M0.3 0.3l9.4 9.4M9.7 0.3l-9.4 9.4" stroke="#9a9ba0" stroke-width="1.1"/></svg>
<svg style="left:17px;top:50px;" width="13" height="15" viewBox="0 0 13 15"><path d="M11.5 1.5v12L1.5 7.5z" fill="none" stroke="#dcdde2" stroke-width="1.6" stroke-linejoin="round"/></svg>
<svg style="left:49px;top:50px;" width="12" height="15" viewBox="0 0 12 15"><path d="M1.5 1.5v12l9-6z" fill="none" stroke="#7b7e88" stroke-width="1.6" stroke-linejoin="round"/></svg>
<svg style="left:80px;top:50px;" width="15" height="15" viewBox="0 0 15 15"><path d="M12.8 5A6 6 0 1 0 13.5 9" fill="none" stroke="#dcdde2" stroke-width="1.7" stroke-linecap="round"/><circle cx="12.3" cy="3.2" r="2" fill="#dcdde2"/></svg>
<svg style="left:113px;top:50px;" width="12" height="15" viewBox="0 0 12 15"><path d="M1.5 1.5h9v12L6 10l-4.5 3.5z" fill="none" stroke="#dcdde2" stroke-width="1.7" stroke-linejoin="round"/></svg>
<div style="left:141px;top:43px;width:196px;height:28px;background:#1b1d24;border-radius:6px"></div>
<svg style="left:154px;top:51px;" width="10" height="12" viewBox="0 0 10 12"><rect x="0.5" y="5" width="9" height="7" rx="1" fill="#a9aab0"/><path d="M2.5 5V3.5a2.5 2.5 0 0 1 5 0V5" fill="none" stroke="#a9aab0" stroke-width="1.5"/></svg>
<div style="left:175px;top:50.15px;font-size:14px;line-height:14px;color:#f2f2f4;font-weight:400;white-space:pre;">j...</div>
<svg style="left:207px;top:50px;" width="14" height="15" viewBox="0 0 14 15"><circle cx="6" cy="6" r="5" fill="none" stroke="#c9cad0" stroke-width="1.3"/><path d="M3.5 6h5M9.8 9.8l3.5 3.8" stroke="#c9cad0" stroke-width="1.3"/></svg>
<svg style="left:238px;top:50px;" width="17" height="15" viewBox="0 0 17 15"><path d="M1 6.5V14h13v-2.5" fill="none" stroke="#c9cad0" stroke-width="1.3"/><path d="M4 10.5C5 6 8 4.2 12 4.2V1.5l4 3.8-4 3.8V6.6C8.5 6.6 6 7.8 4 10.5z" fill="none" stroke="#c9cad0" stroke-width="1.3" stroke-linejoin="round"/></svg>
<div style="left:265px;top:49px;width:1px;height:16px;background:#c9cad0;"></div>
<svg style="left:277px;top:47px;" width="16" height="20" viewBox="0 0 16 20"><path d="M2 4l1.5-2.5 3 .5L8 1l1.5 1 3-.5L14 4l-.5 2 .5 2-1 6-5 4-5-4-1-6 .5-2z" fill="#fb542b"/><path d="M4.5 6l2 .5 1.5-1 1.5 1 2-.5-.5 2-1 1 .5 2-2.5 2-2.5-2 .5-2-1-1z" fill="#fff"/><path d="M6.5 8.5h1M8.5 8.5h1" stroke="#fb542b" stroke-width="1"/></svg>
<div style="left:287px;top:47px;width:12px;height:12px;border-radius:6px;background:#5c5e66;color:#e8e8ec;font-size:8px;line-height:12px;text-align:center;font-weight:700">27</div>
<svg style="left:310px;top:48px;" width="18" height="17" viewBox="0 0 18 17"><path d="M9 1l8.5 15H.5z" fill="#ff4724"/><path d="M9 1l8.5 15H9z" fill="#9e1f63"/><path d="M9 7l3.5 6h-7z" fill="#fff"/><path d="M.5 16h17L9 12z" fill="#662d91"/></svg>
<svg style="left:352px;top:49px;" width="15" height="15" viewBox="0 0 15 15"><path d="M2 5h3a2 2 0 1 1 4 0h3v3a2 2 0 1 1 0 4v3H9a2 2 0 1 0-4 0H2v-3a2 2 0 1 0 0-4z" fill="#e6e7ec"/></svg>
<svg style="left:383px;top:50px;" width="16" height="14" viewBox="0 0 16 14"><path d="M1 2h9M1 6h9M1 10h6" stroke="#e6e7ec" stroke-width="1.6"/><path d="M13 1v10" stroke="#e6e7ec" stroke-width="1.6"/><circle cx="11.5" cy="11" r="2" fill="#e6e7ec"/><path d="M13 1l3 1.5" stroke="#e6e7ec" stroke-width="1.6"/></svg>
<svg style="left:416px;top:50px;" width="14" height="15" viewBox="0 0 14 15"><rect x="0.8" y="0.8" width="12.4" height="13.4" rx="1.5" fill="none" stroke="#e6e7ec" stroke-width="1.5"/><rect x="1" y="1" width="4.5" height="13" fill="#e6e7ec"/></svg>
<svg style="left:454px;top:50px;" width="17" height="14" viewBox="0 0 17 14"><path d="M2 3.5V2.5a1.5 1.5 0 0 1 1.5-1.5h9" fill="none" stroke="#e6e7ec" stroke-width="1.5"/><rect x="1" y="3.5" width="15" height="10" rx="2" fill="none" stroke="#e6e7ec" stroke-width="1.5"/><rect x="10" y="7" width="6" height="4" rx="2" fill="none" stroke="#e6e7ec" stroke-width="1.5"/></svg>
<div style="left:493px;top:46px;width:48px;height:22px;border:1px solid #545a6a;border-radius:11px"></div>
<div style="left:500px;top:54px;width:6px;height:6px;border-radius:3px;background:#aeb0b8"></div>
<div style="left:510px;top:51.07px;font-size:13.5px;line-height:13.5px;color:#eef0f4;font-weight:400;white-space:pre;">VPN</div>
<div style="left:553px;top:52px;width:11px;height:2px;background:#e6e7ec;"></div>
<div style="left:553px;top:57px;width:11px;height:2px;background:#e6e7ec;"></div>
<div style="left:553px;top:62px;width:11px;height:2px;background:#e6e7ec;"></div>
<svg style="left:15px;top:82px;" width="16" height="14" viewBox="0 0 16 14"><path d="M0 1.5a1 1 0 0 1 1-1h4.5l1.5 1.5h8a1 1 0 0 1 1 1V13a1 1 0 0 1-1 1H1a1 1 0 0 1-1-1z" fill="#e8b83f"/><rect y="4" width="16" height="10" rx="1" fill="#f8d775"/></svg>
<svg style="left:47px;top:81px;" width="16" height="16" viewBox="0 0 16 16"><circle cx="8" cy="8" r="8" fill="#1877f2"/><path d="M9 16V10.3h1.9l.3-2.2H9V6.7c0-.6.2-1 1.1-1h1.2V3.7c-.2 0-.9-.1-1.7-.1-1.7 0-2.8 1-2.8 2.9v1.6H5v2.2h1.8V16z" fill="#fff"/></svg>
<svg style="left:79px;top:81px;" width="15" height="15" viewBox="0 0 15 15"><rect width="7" height="7" fill="#f25022"/><rect x="8" width="7" height="7" fill="#7fba00"/><rect y="8" width="7" height="7" fill="#00a4ef"/><rect x="8" y="8" width="7" height="7" fill="#ffb900"/></svg>
<svg style="left:112px;top:82px;" width="14" height="14" viewBox="0 0 14 14"><circle cx="7" cy="7" r="7" fill="#b8b9be"/><path d="M3 3c2 1 3 2 2 4s1 3 3 3 1 3 0 4M9 1c-1 2 1 3 3 3" fill="none" stroke="#2f3340" stroke-width="1.6"/></svg>
<svg style="left:143px;top:83px;" width="16" height="12" viewBox="0 0 16 12"><rect width="16" height="12" rx="3" fill="#ff0000"/><path d="M6.3 3v6l5-3z" fill="#fff"/></svg>
<svg style="left:175px;top:81px;" width="16" height="16" viewBox="0 0 16 16"><circle cx="8" cy="8" r="8" fill="#f96854"/><circle cx="9.5" cy="6.8" r="3.2" fill="#fff"/><rect x="4" y="3.5" width="2" height="9" fill="#fff"/></svg>
<div style="left:199px;top:82.50px;font-size:13px;line-height:13px;color:#eef0f4;font-weight:400;white-space:pre;transform:scaleX(0.7454);transform-origin:left 50%;">EG</div>
<svg style="left:230px;top:81px;" width="16" height="16" viewBox="0 0 16 16"><rect width="16" height="16" rx="3" fill="#2a6df5"/><path d="M3.5 9.5c0-3 2-5 4.5-5s4.5 2 4.5 4.5" fill="none" stroke="#fff" stroke-width="1.3"/><path d="M5 10l1.5-3 1.5 2.5 1.5-2.5 1.5 3" fill="none" stroke="#fff" stroke-width="1.2"/></svg>
<svg style="left:262px;top:81px;" width="16" height="16" viewBox="0 0 16 16"><path d="M13 4A6.5 6.5 0 1 0 14 11" fill="none" stroke="#e8241a" stroke-width="3"/></svg>
<svg style="left:295px;top:81px;" width="16" height="16" viewBox="0 0 16 16"><rect x="6" y="2" width="10" height="12" rx="1" fill="#28a8ea"/><rect x="0" y="4" width="9" height="9" rx="1" fill="#0a64c8"/><circle cx="4.5" cy="8.5" r="2.3" fill="none" stroke="#fff" stroke-width="1.4"/></svg>
<svg style="left:327px;top:82px;" width="14" height="14" viewBox="0 0 14 14"><circle cx="7" cy="7" r="7" fill="#fff"/><path d="M2 8A5 5 0 0 1 10.5 3" fill="none" stroke="#1f6fc8" stroke-width="2"/><path d="M12 6A5 5 0 0 1 3.5 11" fill="none" stroke="#1f6fc8" stroke-width="2"/><path d="M5 9.5l2.5-3 1 2 2-3" fill="none" stroke="#e0241b" stroke-width="1.6"/></svg>
<svg style="left:423px;top:82px;" width="14" height="14" viewBox="0 0 14 14"><circle cx="7" cy="7" r="7" fill="#fff"/><path d="M2 8A5 5 0 0 1 10.5 3" fill="none" stroke="#1f6fc8" stroke-width="2"/><path d="M12 6A5 5 0 0 1 3.5 11" fill="none" stroke="#1f6fc8" stroke-width="2"/><path d="M5 9.5l2.5-3 1 2 2-3" fill="none" stroke="#e0241b" stroke-width="1.6"/></svg>
<svg style="left:455px;top:82px;" width="14" height="14" viewBox="0 0 14 14"><circle cx="7" cy="7" r="7" fill="#fff"/><path d="M2 8A5 5 0 0 1 10.5 3" fill="none" stroke="#1f6fc8" stroke-width="2"/><path d="M12 6A5 5 0 0 1 3.5 11" fill="none" stroke="#1f6fc8" stroke-width="2"/><path d="M5 9.5l2.5-3 1 2 2-3" fill="none" stroke="#e0241b" stroke-width="1.6"/></svg>
<svg style="left:358px;top:82px;" width="16" height="14" viewBox="0 0 16 14"><text x="0" y="12" font-size="12" font-style="italic" font-weight="700" fill="#2432a8" font-family="Liberation Serif">w</text><text x="8" y="12" font-size="12" font-style="italic" fill="#e0a020" font-family="Liberation Serif">R</text></svg>
<svg style="left:391px;top:81px;" width="15" height="16" viewBox="0 0 15 16"><path d="M1 3l13 5-13 5z" fill="#0d3f6b"/><path d="M5 6l4 2-4 2" fill="none" stroke="#5da8e0" stroke-width="1"/></svg>
<svg style="left:486px;top:81px;" width="16" height="16" viewBox="0 0 16 16"><ellipse cx="4.5" cy="10.5" rx="4" ry="5.5" fill="#16b3e8"/><ellipse cx="11" cy="10.5" rx="4.5" ry="5.5" fill="#0e4f5a"/><path d="M1 6V1M7.5 6V1" stroke="#16b3e8" stroke-width="2"/><ellipse cx="7.5" cy="10" rx="1.5" ry="3" fill="#9fd83a"/></svg>
<svg style="left:553px;top:85px;" width="10" height="9" viewBox="0 0 10 9"><path d="M1 1l3.5 3.5L1 8M5.5 1L9 4.5 5.5 8" fill="none" stroke="#e6e7ec" stroke-width="1.7"/></svg>
<svg style="left:297px;top:21px;" width="12" height="8" viewBox="0 0 12 8"><path d="M1 1l3 6M6 1h4.5v6H5.5M10.5 7h1" fill="none" stroke="#b8b9bf" stroke-width="1.1" opacity=".8"/></svg>
<div style="left:1px;top:149px;width:563px;height:891px;background:#232429;"></div>
<div style="left:564px;top:108px;width:17px;height:931px;background:#3f3f3f;"></div>
<div style="left:566px;top:316px;width:13px;height:252px;background:#656565;"></div>
<svg style="left:568px;top:114px;" width="9" height="6" viewBox="0 0 9 6"><path d="M0 6l4.5-5 4.5 5z" fill="#f0f0f0"/></svg>
<svg style="left:568px;top:1026px;" width="9" height="6" viewBox="0 0 9 6"><path d="M0 0l4.5 5 4.5-5z" fill="#f0f0f0"/></svg>
<div style="left:9px;top:120px;width:548px;height:123px;background:#2d3038;border:1px solid #46484e;border-radius:3px"></div>
<div style="left:1px;top:108px;width:563px;height:41px;background:#17181b;"></div>
<div style="left:13px;top:124.5px;width:14px;height:2px;background:#fff;"></div>
<div style="left:13px;top:128px;width:14px;height:2px;background:#fff;"></div>
<div style="left:13px;top:131.5px;width:14px;height:2px;background:#fff;"></div>
<svg style="left:37px;top:116px;" width="33" height="25" viewBox="0 0 33 25"><defs><linearGradient id="jg" x1="0" y1="1" x2="1" y2="0"><stop offset="0" stop-color="#1a6ef5"/><stop offset="1" stop-color="#2b5fc8"/></linearGradient></defs><path d="M10 1h6l-2.5 17c-.6 4-3.5 6.5-7.5 6.5-2.5 0-4.5-.8-5.5-1.5l2-4.2c.8.5 1.8 .9 2.8.9 1.5 0 2.3-1 2.6-2.6z" fill="url(#jg)"/><path d="M10.5 1h7l3.5 15L27.5 1H33l-9 23.5h-6z" fill="#ff4000"/></svg>
<svg style="left:432px;top:120px;" width="15" height="15" viewBox="0 0 15 15"><circle cx="6.2" cy="6.2" r="4.8" fill="none" stroke="#fff" stroke-width="1.8"/><path d="M9.6 9.6l4.2 4.2" stroke="#fff" stroke-width="2" stroke-linecap="round"/></svg>
<svg style="left:456px;top:116px;" width="24" height="24" viewBox="0 0 24 24"><defs><radialGradient id="av" cx="45%" cy="50%" r="60%"><stop offset="0" stop-color="#d6c49e"/><stop offset="1" stop-color="#9c8862"/></radialGradient><clipPath id="avc"><circle cx="12" cy="12" r="12"/></clipPath></defs><g clip-path="url(#avc)"><rect width="24" height="24" fill="url(#av)"/><path d="M8 6c0-3 2.5-4.5 5-4.5S17.5 3 17.5 6v3c-1-1.5-2-2-4.5-2S9 8 8.5 10z" fill="#3a3024"/><path d="M9 8.5c0-1.5 1.5-2.5 4-2.5s4 1 4 2.5v3.5c0 2.5-1.8 4.5-4 4.5s-4-2-4-4.5z" fill="#8f7a58"/><path d="M10.5 9.5c1.5-.3 3-.3 5 .5" stroke="#4a3e30" stroke-width="0.8" fill="none"/><path d="M3 24l4-6 6-2 6 2 3 6z" fill="#b8a47c"/><path d="M9 17l4 3 1-4" fill="none" stroke="#5a4a36" stroke-width="1"/><path d="M13 17l1.5 3" stroke="#eee" stroke-width="1"/></g></svg>
<svg style="left:488px;top:121px;" width="17" height="13" viewBox="0 0 17 13"><rect x="0.9" y="0.9" width="15.2" height="11.2" fill="none" stroke="#fff" stroke-width="1.6"/><path d="M1.5 2l7 5 7-5" fill="none" stroke="#fff" stroke-width="1.5"/></svg>
<svg style="left:513px;top:119px;" width="15" height="17" viewBox="0 0 15 17"><path d="M7.5 2c-2.8 0-4.2 2.3-4.2 5v4.2L1.2 13.6h12.6l-2.1-2.4V7c0-2.7-1.4-5-4.2-5z" fill="none" stroke="#fff" stroke-width="1.4" stroke-linejoin="round"/><path d="M6 14.5h3v1.2a1.5 1.5 0 0 1-3 0z" fill="#fff"/><rect x="6.7" y="0.3" width="1.6" height="2" fill="#fff"/></svg>
<svg style="left:538px;top:121px;" width="14" height="14" viewBox="0 0 14 14"><path d="M7.5 1A6.2 6.2 0 1 0 13.2 8.8 4.8 4.8 0 0 1 7.5 1z" fill="none" stroke="#fff" stroke-width="1.3" stroke-linejoin="round"/></svg>
<svg style="left:19px;top:152px;" width="36" height="36" viewBox="0 0 36 36"><circle cx="18" cy="18" r="18" fill="#d8261c"/><path d="M11 26L18.5 7.5 25.5 26M8 20.8L23.5 20" fill="none" stroke="#fff" stroke-width="3" stroke-linecap="round" stroke-linejoin="round"/></svg>
<div style="left:62px;top:151.42px;font-size:12.5px;line-height:12.5px;color:#fff;font-weight:700;letter-spacing:-0.393px;white-space:pre;-webkit-text-stroke:0.25px currentColor;">RecruteurAdesco</div>
<svg style="left:169px;top:154.5px;" width="11" height="9" viewBox="0 0 11 9"><rect x="0.5" y="0.5" width="10" height="8" fill="none" stroke="#8f9196" stroke-width="1"/><path d="M0.5 1.5l5 3.5 5-3.5" fill="none" stroke="#8f9196" stroke-width="1"/></svg>
<div style="left:62px;top:165.54px;font-size:9.4px;line-height:9.4px;color:#9a9ba1;font-weight:400;letter-spacing:0.138px;white-space:pre;-webkit-text-stroke:0.25px currentColor;-webkit-text-stroke:0;">Niveau 5</div>
<div style="left:62px;top:177.99px;font-size:9.7px;line-height:9.7px;color:#62b4f7;font-weight:400;letter-spacing:-0.048px;white-space:pre;-webkit-text-stroke:0.25px currentColor;-webkit-text-stroke:0.1px currentColor;">28 avril 2023 à 09:08:20</div>
<div style="left:496px;top:152px;width:12px;height:12px;background:#484a50;border-radius:2px"></div>
<svg style="left:498px;top:154.5px;" width="8" height="7" viewBox="0 0 8 7"><path d="M0.6 0.5h2.2v2.6L1.3 6.2H0.4l.9-3H0.6zM4.6 0.5h2.2v2.6L5.3 6.2H4.4l.9-3H4.6z" fill="#7d7f85"/></svg>
<div style="left:515px;top:152px;width:12px;height:12px;background:#484a50;border-radius:2px"></div>
<svg style="left:517px;top:155px;" width="8" height="6" viewBox="0 0 8 6"><rect x="1.5" y="0" width="1.4" height="1.4" fill="#7d7f85"/><rect x="5" y="0" width="1.4" height="1.4" fill="#7d7f85"/><path d="M0.5 5.5c2-2 5-2 7 0" fill="none" stroke="#7d7f85" stroke-width="0.9"/></svg>
<div style="left:535px;top:152px;width:12px;height:12px;background:#6b1e22;border-radius:2px"></div>
<div style="left:540.3px;top:154px;width:1.6px;height:5px;background:#a89c9c;"></div>
<div style="left:540.3px;top:160.5px;width:1.6px;height:1.6px;background:#a89c9c;"></div>
<div style="left:19px;top:195px;width:528px;height:1px;border-top:1px dotted #55575d"></div>
<div style="left:18.7px;top:208.27px;font-size:11.5px;line-height:11.5px;color:#f2f2f4;font-weight:400;letter-spacing:-0.182px;white-space:pre;-webkit-text-stroke:0.25px currentColor;">3k net mensuel, la moyenne basse du forum</div>
<div style="left:9px;top:254px;width:548px;height:135px;background:#373c49;border:1px solid #485466;border-radius:3px"></div>
<svg style="left:19px;top:264px;" width="36" height="36" viewBox="0 0 36 36"><defs><clipPath id="c264"><circle cx="18" cy="18" r="18"/></clipPath><radialGradient id="g264" cx="50%" cy="30%" r="70%"><stop offset="0" stop-color="#d8d8d8"/><stop offset="1" stop-color="#8a8a8a"/></radialGradient></defs><g clip-path="url(#c264)"><rect width="36" height="36" fill="url(#g264)"/><circle cx="9" cy="9" r="4" fill="#6a6a6a"/><path d="M1 40V20c0-4 3-7 8-7s7 3 7 7v20z" fill="#666"/><circle cx="18" cy="10" r="3.6" fill="#5e5e5e"/><path d="M11 40V21c0-4 3-6 7-6s7 2 7 6v19z" fill="#5a5a5a"/><circle cx="27" cy="9" r="3.8" fill="#707070"/><path d="M21 40V19c0-4 2-6 6-6s8 3 8 7v20z" fill="#747474"/><path d="M10 36l1-12M26 36l-1-12" stroke="#c8c8c8" stroke-width="1.2"/></g></svg>
<div style="left:62px;top:263.82px;font-size:12.5px;line-height:12.5px;color:#fff;font-weight:700;letter-spacing:-0.41px;white-space:pre;-webkit-text-stroke:0.25px currentColor;">xxxantariusxxx</div>
<svg style="left:155.5px;top:266.5px;" width="11" height="9" viewBox="0 0 11 9"><rect x="0.5" y="0.5" width="10" height="8" fill="none" stroke="#8f9196" stroke-width="1"/><path d="M0.5 1.5l5 3.5 5-3.5" fill="none" stroke="#8f9196" stroke-width="1"/></svg>
<div style="left:62px;top:277.54px;font-size:9.4px;line-height:9.4px;color:#9a9ba1;font-weight:400;letter-spacing:0.084px;white-space:pre;-webkit-text-stroke:0.25px currentColor;-webkit-text-stroke:0;">Niveau 10</div>
<div style="left:62px;top:289.79px;font-size:9.7px;line-height:9.7px;color:#62b4f7;font-weight:400;letter-spacing:-0.048px;white-space:pre;-webkit-text-stroke:0.25px currentColor;-webkit-text-stroke:0.1px currentColor;">28 avril 2023 à 09:09:44</div>
<div style="left:496px;top:264px;width:12px;height:12px;background:#484a50;border-radius:2px"></div>
<svg style="left:498px;top:266.5px;" width="8" height="7" viewBox="0 0 8 7"><path d="M0.6 0.5h2.2v2.6L1.3 6.2H0.4l.9-3H0.6zM4.6 0.5h2.2v2.6L5.3 6.2H4.4l.9-3H4.6z" fill="#7d7f85"/></svg>
<div style="left:515px;top:264px;width:12px;height:12px;background:#484a50;border-radius:2px"></div>
<svg style="left:517px;top:267px;" width="8" height="6" viewBox="0 0 8 6"><rect x="1.5" y="0" width="1.4" height="1.4" fill="#7d7f85"/><rect x="5" y="0" width="1.4" height="1.4" fill="#7d7f85"/><path d="M0.5 5.5c2-2 5-2 7 0" fill="none" stroke="#7d7f85" stroke-width="0.9"/></svg>
<div style="left:535px;top:264px;width:12px;height:12px;background:#6b1e22;border-radius:2px"></div>
<div style="left:540.3px;top:266px;width:1.6px;height:5px;background:#a89c9c;"></div>
<div style="left:540.3px;top:272.5px;width:1.6px;height:1.6px;background:#a89c9c;"></div>
<div style="left:19px;top:307px;width:528px;height:1px;border-top:1px dotted #55575d"></div>
<div style="left:18.7px;top:320.07px;font-size:11.5px;line-height:11.5px;color:#f2f2f4;font-weight:400;letter-spacing:-0.205px;white-space:pre;-webkit-text-stroke:0.25px currentColor;">C'est fou quand même, le salaire médian en France c'est 1900€ net, seul 10% de la population est au</div>
<div style="left:18.7px;top:337.27px;font-size:11.5px;line-height:11.5px;color:#f2f2f4;font-weight:400;letter-spacing:-0.142px;white-space:pre;-webkit-text-stroke:0.25px currentColor;">dessus de 3000€ net. Et bien je crois qu'ils sont tous sur jvc... Je remarque donc qu'il y a une corrélation</div>
<div style="left:18.7px;top:354.27px;font-size:11.5px;line-height:11.5px;color:#f2f2f4;font-weight:400;letter-spacing:-0.096px;white-space:pre;-webkit-text-stroke:0.25px currentColor;">entre réussite professionnelle et invisibilité auprès des femmes.</div>
<div style="left:9px;top:400px;width:548px;height:302px;background:#2d3038;border:1px solid #46484e;border-radius:3px"></div>
<svg style="left:19px;top:409px;" width="36" height="36" viewBox="0 0 36 36"><defs><clipPath id="c409"><circle cx="18" cy="18" r="18"/></clipPath><radialGradient id="g409" cx="50%" cy="30%" r="70%"><stop offset="0" stop-color="#d8d8d8"/><stop offset="1" stop-color="#8a8a8a"/></radialGradient></defs><g clip-path="url(#c409)"><rect width="36" height="36" fill="url(#g409)"/><circle cx="9" cy="9" r="4" fill="#6a6a6a"/><path d="M1 40V20c0-4 3-7 8-7s7 3 7 7v20z" fill="#666"/><circle cx="18" cy="10" r="3.6" fill="#5e5e5e"/><path d="M11 40V21c0-4 3-6 7-6s7 2 7 6v19z" fill="#5a5a5a"/><circle cx="27" cy="9" r="3.8" fill="#707070"/><path d="M21 40V19c0-4 2-6 6-6s8 3 8 7v20z" fill="#747474"/><path d="M10 36l1-12M26 36l-1-12" stroke="#c8c8c8" stroke-width="1.2"/></g></svg>
<div style="left:62px;top:410.12px;font-size:12.5px;line-height:12.5px;color:#fff;font-weight:700;letter-spacing:-0.2px;white-space:pre;-webkit-text-stroke:0.25px currentColor;">foutix85</div>
<svg style="left:117.5px;top:412px;" width="11" height="9" viewBox="0 0 11 9"><rect x="0.5" y="0.5" width="10" height="8" fill="none" stroke="#8f9196" stroke-width="1"/><path d="M0.5 1.5l5 3.5 5-3.5" fill="none" stroke="#8f9196" stroke-width="1"/></svg>
<div style="left:62px;top:423.54px;font-size:9.4px;line-height:9.4px;color:#9a9ba1;font-weight:400;letter-spacing:0.052px;white-space:pre;-webkit-text-stroke:0.25px currentColor;-webkit-text-stroke:0;">Niveau 3</div>
<div style="left:62px;top:435.99px;font-size:9.7px;line-height:9.7px;color:#62b4f7;font-weight:400;letter-spacing:-0.048px;white-space:pre;-webkit-text-stroke:0.25px currentColor;-webkit-text-stroke:0.1px currentColor;">28 avril 2023 à 09:09:50</div>
<div style="left:496px;top:410px;width:12px;height:12px;background:#484a50;border-radius:2px"></div>
<svg style="left:498px;top:412.5px;" width="8" height="7" viewBox="0 0 8 7"><path d="M0.6 0.5h2.2v2.6L1.3 6.2H0.4l.9-3H0.6zM4.6 0.5h2.2v2.6L5.3 6.2H4.4l.9-3H4.6z" fill="#7d7f85"/></svg>
<div style="left:515px;top:410px;width:12px;height:12px;background:#484a50;border-radius:2px"></div>
<svg style="left:517px;top:413px;" width="8" height="6" viewBox="0 0 8 6"><rect x="1.5" y="0" width="1.4" height="1.4" fill="#7d7f85"/><rect x="5" y="0" width="1.4" height="1.4" fill="#7d7f85"/><path d="M0.5 5.5c2-2 5-2 7 0" fill="none" stroke="#7d7f85" stroke-width="0.9"/></svg>
<div style="left:535px;top:410px;width:12px;height:12px;background:#6b1e22;border-radius:2px"></div>
<div style="left:540.3px;top:412px;width:1.6px;height:5px;background:#a89c9c;"></div>
<div style="left:540.3px;top:418.5px;width:1.6px;height:1.6px;background:#a89c9c;"></div>
<div style="left:19px;top:452px;width:528px;height:1px;border-top:1px dotted #55575d"></div>
<div style="left:30px;top:462px;width:3px;height:89px;background:#1d1e22;"></div>
<div style="left:40.2px;top:473.27px;font-size:11.5px;line-height:11.5px;color:#d2d3d6;font-weight:400;letter-spacing:-0.22px;white-space:pre;-webkit-text-stroke:0.25px currentColor;">Le 28 avril 2023 à 08:54:26 :</div>
<div style="left:40.2px;top:490.47px;font-size:11.5px;line-height:11.5px;color:#d2d3d6;font-weight:400;letter-spacing:-0.126px;white-space:pre;-webkit-text-stroke:0.25px currentColor;">Bordel les les mecs qui font 30k et traînent sur le forum a 8h du mat...</div>
<div style="left:40.2px;top:518.57px;font-size:11.5px;line-height:11.5px;color:#d2d3d6;font-weight:400;letter-spacing:-0.295px;white-space:pre;-webkit-text-stroke:0.25px currentColor;">C'est beau</div>
<div style="left:18.7px;top:591.07px;font-size:11.5px;line-height:11.5px;color:#fff;font-weight:400;letter-spacing:-0.517px;white-space:pre;-webkit-text-stroke:0.25px currentColor;">L'élite</div>
<svg style="left:48px;top:562px;" width="51" height="38" viewBox="0 0 51 38"><rect width="51" height="38" fill="#fff"/><path d="M9 20c2-4 6-7 10-8l4 3-6 6-3 2z" fill="#d8bf8a"/><path d="M14 38l2-14 7-8 9-2 7 4 4 8 2 12z" fill="#d2b57c"/><path d="M20 38l3-12 6-6" fill="none" stroke="#a88a55" stroke-width="1.2"/><path d="M30 38l1-10 4-6" fill="none" stroke="#e8d6aa" stroke-width="1.5"/><path d="M22 15l-3-9 2-4 3 2 1 8z" fill="#e0ad8a"/><path d="M25 14l6-8 3 1-3 8z" fill="#d89f7e"/><circle cx="38" cy="12" r="5" fill="#c99676"/><path d="M33 9c1-4 7-5 10-2 1 2 0 4-1 5-2-2-5-3-9-3z" fill="#6a4630"/><path d="M32 38l6-8 3 8z" fill="#3a3a40"/></svg>
<div style="left:19px;top:627px;width:528px;height:1px;border-top:1px dotted #55575d"></div>
<div style="left:18.7px;top:638.80px;font-size:8.5px;line-height:8.5px;color:#a9aaaf;font-weight:400;letter-spacing:-0.203px;white-space:pre;-webkit-text-stroke:0.25px currentColor;">Supporter de l'équipe de France !</div>
<svg style="left:19px;top:649px;" width="51" height="38" viewBox="0 0 51 38"><rect width="51" height="38" fill="#000"/><rect x="0" y="1" width="2" height="2" fill="#7a6a80"/><rect x="0" y="3" width="2" height="2" fill="#9a8a9a"/><rect x="0" y="5" width="2" height="2" fill="#9a8a9a"/><rect x="0" y="7" width="2" height="2" fill="#7a6a80"/><rect x="0" y="9" width="2" height="2" fill="#3a3a6a"/><rect x="0" y="11" width="2" height="2" fill="#9a8a9a"/><rect x="2" y="1" width="2" height="2" fill="#703848"/><rect x="2" y="3" width="2" height="2" fill="#5a2a3a"/><rect x="2" y="5" width="2" height="2" fill="#9a8a9a"/><rect x="2" y="7" width="2" height="2" fill="#8a3a4a"/><rect x="2" y="9" width="2" height="2" fill="#9a8a9a"/><rect x="2" y="11" width="2" height="2" fill="#8a3a4a"/><rect x="4" y="1" width="2" height="2" fill="#703848"/><rect x="4" y="3" width="2" height="2" fill="#3a3a6a"/><rect x="4" y="5" width="2" height="2" fill="#9a8a9a"/><rect x="4" y="7" width="2" height="2" fill="#7a6a80"/><rect x="4" y="9" width="2" height="2" fill="#7a6a80"/><rect x="4" y="11" width="2" height="2" fill="#5a2a3a"/><rect x="6" y="1" width="2" height="2" fill="#703848"/><rect x="6" y="3" width="2" height="2" fill="#9a8a9a"/><rect x="6" y="5" width="2" height="2" fill="#9a8a9a"/><rect x="6" y="7" width="2" height="2" fill="#703848"/><rect x="6" y="9" width="2" height="2" fill="#703848"/><rect x="6" y="11" width="2" height="2" fill="#5a2a3a"/><rect x="8" y="1" width="2" height="2" fill="#7a6a80"/><rect x="8" y="3" width="2" height="2" fill="#7a6a80"/><rect x="8" y="5" width="2" height="2" fill="#5a2a3a"/><rect x="8" y="7" width="2" height="2" fill="#7a6a80"/><rect x="8" y="9" width="2" height="2" fill="#9a8a9a"/><rect x="8" y="11" width="2" height="2" fill="#703848"/><rect x="10" y="1" width="2" height="2" fill="#5a2a3a"/><rect x="10" y="3" width="2" height="2" fill="#8a3a4a"/><rect x="10" y="5" width="2" height="2" fill="#5a2a3a"/><rect x="10" y="7" width="2" height="2" fill="#8a3a4a"/><rect x="10" y="9" width="2" height="2" fill="#7a6a80"/><rect x="10" y="11" width="2" height="2" fill="#9a8a9a"/><rect x="12" y="1" width="2" height="2" fill="#8a3a4a"/><rect x="12" y="3" width="2" height="2" fill="#3a3a6a"/><rect x="12" y="5" width="2" height="2" fill="#8a3a4a"/><rect x="12" y="7" width="2" height="2" fill="#3a3a6a"/><rect x="12" y="9" width="2" height="2" fill="#703848"/><rect x="12" y="11" width="2" height="2" fill="#9a8a9a"/><rect x="14" y="1" width="2" height="2" fill="#5a2a3a"/><rect x="14" y="3" width="2" height="2" fill="#703848"/><rect x="14" y="5" width="2" height="2" fill="#5a2a3a"/><rect x="14" y="7" width="2" height="2" fill="#703848"/><rect x="14" y="9" width="2" height="2" fill="#703848"/><rect x="14" y="11" width="2" height="2" fill="#5a2a3a"/><rect x="16" y="1" width="2" height="2" fill="#9a8a9a"/><rect x="16" y="3" width="2" height="2" fill="#703848"/><rect x="16" y="5" width="2" height="2" fill="#7a6a80"/><rect x="16" y="7" width="2" height="2" fill="#3a3a6a"/><rect x="16" y="9" width="2" height="2" fill="#8a3a4a"/><rect x="16" y="11" width="2" height="2" fill="#8a3a4a"/><rect x="18" y="1" width="2" height="2" fill="#7a6a80"/><rect x="18" y="3" width="2" height="2" fill="#703848"/><rect x="18" y="5" width="2" height="2" fill="#7a6a80"/><rect x="18" y="7" width="2" height="2" fill="#3a3a6a"/><rect x="18" y="9" width="2" height="2" fill="#5a2a3a"/><rect x="18" y="11" width="2" height="2" fill="#703848"/><rect x="20" y="1" width="2" height="2" fill="#5a2a3a"/><rect x="20" y="3" width="2" height="2" fill="#3a3a6a"/><rect x="20" y="5" width="2" height="2" fill="#703848"/><rect x="20" y="7" width="2" height="2" fill="#9a8a9a"/><rect x="20" y="9" width="2" height="2" fill="#703848"/><rect x="20" y="11" width="2" height="2" fill="#9a8a9a"/><rect x="22" y="1" width="2" height="2" fill="#3a3a6a"/><rect x="22" y="3" width="2" height="2" fill="#9a8a9a"/><rect x="22" y="5" width="2" height="2" fill="#9a8a9a"/><rect x="22" y="7" width="2" height="2" fill="#703848"/><rect x="22" y="9" width="2" height="2" fill="#9a8a9a"/><rect x="22" y="11" width="2" height="2" fill="#7a6a80"/><rect x="24" y="1" width="2" height="2" fill="#3a3a6a"/><rect x="24" y="3" width="2" height="2" fill="#5a2a3a"/><rect x="24" y="5" width="2" height="2" fill="#8a3a4a"/><rect x="24" y="7" width="2" height="2" fill="#3a3a6a"/><rect x="24" y="9" width="2" height="2" fill="#9a8a9a"/><rect x="24" y="11" width="2" height="2" fill="#5a2a3a"/><rect x="26" y="1" width="2" height="2" fill="#5a2a3a"/><rect x="26" y="3" width="2" height="2" fill="#7a6a80"/><rect x="26" y="5" width="2" height="2" fill="#5a2a3a"/><rect x="26" y="7" width="2" height="2" fill="#3a3a6a"/><rect x="26" y="9" width="2" height="2" fill="#9a8a9a"/><rect x="26" y="11" width="2" height="2" fill="#9a8a9a"/><rect x="28" y="1" width="2" height="2" fill="#9a8a9a"/><rect x="28" y="3" width="2" height="2" fill="#8a3a4a"/><rect x="28" y="5" width="2" height="2" fill="#5a2a3a"/><rect x="28" y="7" width="2" height="2" fill="#5a2a3a"/><rect x="28" y="9" width="2" height="2" fill="#7a6a80"/><rect x="28" y="11" width="2" height="2" fill="#5a2a3a"/><rect x="30" y="1" width="2" height="2" fill="#9a8a9a"/><rect x="30" y="3" width="2" height="2" fill="#3a3a6a"/><rect x="30" y="5" width="2" height="2" fill="#3a3a6a"/><rect x="30" y="7" width="2" height="2" fill="#8a3a4a"/><rect x="30" y="9" width="2" height="2" fill="#8a3a4a"/><rect x="30" y="11" width="2" height="2" fill="#703848"/><rect x="32" y="1" width="2" height="2" fill="#5a2a3a"/><rect x="32" y="3" width="2" height="2" fill="#703848"/><rect x="32" y="5" width="2" height="2" fill="#8a3a4a"/><rect x="32" y="7" width="2" height="2" fill="#3a3a6a"/><rect x="32" y="9" width="2" height="2" fill="#8a3a4a"/><rect x="32" y="11" width="2" height="2" fill="#703848"/><rect x="34" y="1" width="2" height="2" fill="#7a6a80"/><rect x="34" y="3" width="2" height="2" fill="#8a3a4a"/><rect x="34" y="5" width="2" height="2" fill="#3a3a6a"/><rect x="34" y="7" width="2" height="2" fill="#703848"/><rect x="34" y="9" width="2" height="2" fill="#703848"/><rect x="34" y="11" width="2" height="2" fill="#8a3a4a"/><rect x="36" y="1" width="2" height="2" fill="#8a3a4a"/><rect x="36" y="3" width="2" height="2" fill="#9a8a9a"/><rect x="36" y="5" width="2" height="2" fill="#9a8a9a"/><rect x="36" y="7" width="2" height="2" fill="#8a3a4a"/><rect x="36" y="9" width="2" height="2" fill="#703848"/><rect x="36" y="11" width="2" height="2" fill="#5a2a3a"/><rect x="38" y="1" width="2" height="2" fill="#9a8a9a"/><rect x="38" y="3" width="2" height="2" fill="#3a3a6a"/><rect x="38" y="5" width="2" height="2" fill="#9a8a9a"/><rect x="38" y="7" width="2" height="2" fill="#3a3a6a"/><rect x="38" y="9" width="2" height="2" fill="#9a8a9a"/><rect x="38" y="11" width="2" height="2" fill="#7a6a80"/><rect x="40" y="1" width="2" height="2" fill="#8a3a4a"/><rect x="40" y="3" width="2" height="2" fill="#3a3a6a"/><rect x="40" y="5" width="2" height="2" fill="#8a3a4a"/><rect x="40" y="7" width="2" height="2" fill="#8a3a4a"/><rect x="40" y="9" width="2" height="2" fill="#8a3a4a"/><rect x="40" y="11" width="2" height="2" fill="#9a8a9a"/><rect x="42" y="1" width="2" height="2" fill="#9a8a9a"/><rect x="42" y="3" width="2" height="2" fill="#8a3a4a"/><rect x="42" y="5" width="2" height="2" fill="#7a6a80"/><rect x="42" y="7" width="2" height="2" fill="#703848"/><rect x="42" y="9" width="2" height="2" fill="#3a3a6a"/><rect x="42" y="11" width="2" height="2" fill="#9a8a9a"/><rect x="44" y="1" width="2" height="2" fill="#3a3a6a"/><rect x="44" y="3" width="2" height="2" fill="#7a6a80"/><rect x="44" y="5" width="2" height="2" fill="#5a2a3a"/><rect x="44" y="7" width="2" height="2" fill="#8a3a4a"/><rect x="44" y="9" width="2" height="2" fill="#3a3a6a"/><rect x="44" y="11" width="2" height="2" fill="#3a3a6a"/><rect x="46" y="1" width="2" height="2" fill="#3a3a6a"/><rect x="46" y="3" width="2" height="2" fill="#7a6a80"/><rect x="46" y="5" width="2" height="2" fill="#703848"/><rect x="46" y="7" width="2" height="2" fill="#703848"/><rect x="46" y="9" width="2" height="2" fill="#703848"/><rect x="46" y="11" width="2" height="2" fill="#9a8a9a"/><rect x="48" y="1" width="2" height="2" fill="#703848"/><rect x="48" y="3" width="2" height="2" fill="#5a2a3a"/><rect x="48" y="5" width="2" height="2" fill="#9a8a9a"/><rect x="48" y="7" width="2" height="2" fill="#5a2a3a"/><rect x="48" y="9" width="2" height="2" fill="#9a8a9a"/><rect x="48" y="11" width="2" height="2" fill="#8a3a4a"/><rect x="50" y="1" width="2" height="2" fill="#9a8a9a"/><rect x="50" y="3" width="2" height="2" fill="#9a8a9a"/><rect x="50" y="5" width="2" height="2" fill="#3a3a6a"/><rect x="50" y="7" width="2" height="2" fill="#703848"/><rect x="50" y="9" width="2" height="2" fill="#5a2a3a"/><rect x="50" y="11" width="2" height="2" fill="#5a2a3a"/><rect y="24" width="51" height="4" fill="#dfe6f2"/><rect y="28" width="51" height="8" fill="#5aa040"/><rect y="32" width="51" height="4" fill="#70b050"/><rect x="1" y="10" width="3" height="16" rx="1" fill="#1c2850"/><circle cx="2.5" cy="10" r="1.4" fill="#5a3a30"/><rect x="5" y="11" width="3" height="16" rx="1" fill="#162040"/><circle cx="6.5" cy="10" r="1.4" fill="#5a3a30"/><rect x="9" y="11" width="3" height="14" rx="1" fill="#1c2850"/><circle cx="10.5" cy="11" r="1.4" fill="#5a3a30"/><rect x="13" y="10" width="3" height="14" rx="1" fill="#121a38"/><circle cx="14.5" cy="11" r="1.4" fill="#5a3a30"/><rect x="17" y="11" width="3" height="17" rx="1" fill="#1c2850"/><circle cx="18.5" cy="11" r="1.4" fill="#5a3a30"/><rect x="21" y="11" width="3" height="16" rx="1" fill="#121a38"/><circle cx="22.5" cy="10" r="1.4" fill="#5a3a30"/><rect x="25" y="9" width="3" height="14" rx="1" fill="#121a38"/><circle cx="26.5" cy="9" r="1.4" fill="#5a3a30"/><rect x="29" y="11" width="3" height="16" rx="1" fill="#121a38"/><circle cx="30.5" cy="10" r="1.4" fill="#5a3a30"/><rect x="33" y="11" width="3" height="16" rx="1" fill="#162040"/><circle cx="34.5" cy="10" r="1.4" fill="#5a3a30"/><rect x="37" y="10" width="3" height="16" rx="1" fill="#1c2850"/><circle cx="38.5" cy="11" r="1.4" fill="#5a3a30"/><rect x="41" y="11" width="3" height="16" rx="1" fill="#1c2850"/><circle cx="42.5" cy="9" r="1.4" fill="#5a3a30"/><rect x="45" y="9" width="3" height="15" rx="1" fill="#1c2850"/><circle cx="46.5" cy="11" r="1.4" fill="#5a3a30"/><rect x="49" y="10" width="3" height="16" rx="1" fill="#162040"/><circle cx="50.5" cy="10" r="1.4" fill="#5a3a30"/><rect y="36" width="51" height="2" fill="#0a0a0a"/></svg>
<svg style="left:72px;top:649px;" width="51" height="38" viewBox="0 0 51 38"><rect width="51" height="38" fill="#050505"/><rect x="7.0" y="1.0" width="6" height="12" fill="#3a2a20"/><ellipse cx="10.0" cy="5.5" rx="2.2" ry="3" fill="#6a4028"/><path d="M7.0 13.0c0-3 1.5-4 3-4s3 1 3 4z" fill="#7a2a2a"/><rect x="9.0" y="10.5" width="2" height="1.5" fill="#e8e8f0"/><rect x="13.3" y="1.0" width="6" height="12" fill="#3a3a20"/><ellipse cx="16.3" cy="5.5" rx="2.2" ry="3" fill="#b07850"/><path d="M13.3 13.0c0-3 1.5-4 3-4s3 1 3 4z" fill="#5a1a20"/><rect x="15.3" y="10.5" width="2" height="1.5" fill="#e8e8f0"/><rect x="19.6" y="1.0" width="6" height="12" fill="#20202a"/><ellipse cx="22.6" cy="5.5" rx="2.2" ry="3" fill="#c89070"/><path d="M19.6 13.0c0-3 1.5-4 3-4s3 1 3 4z" fill="#22305a"/><rect x="21.6" y="10.5" width="2" height="1.5" fill="#e8e8f0"/><rect x="25.9" y="1.0" width="6" height="12" fill="#3a3a20"/><ellipse cx="28.9" cy="5.5" rx="2.2" ry="3" fill="#8a5a3a"/><path d="M25.9 13.0c0-3 1.5-4 3-4s3 1 3 4z" fill="#22305a"/><rect x="27.9" y="10.5" width="2" height="1.5" fill="#e8e8f0"/><rect x="32.2" y="1.0" width="6" height="12" fill="#3a2a20"/><ellipse cx="35.2" cy="5.5" rx="2.2" ry="3" fill="#b07850"/><path d="M32.2 13.0c0-3 1.5-4 3-4s3 1 3 4z" fill="#22305a"/><rect x="34.2" y="10.5" width="2" height="1.5" fill="#e8e8f0"/><rect x="38.5" y="1.0" width="6" height="12" fill="#3a3a20"/><ellipse cx="41.5" cy="5.5" rx="2.2" ry="3" fill="#8a5a3a"/><path d="M38.5 13.0c0-3 1.5-4 3-4s3 1 3 4z" fill="#7a2a2a"/><rect x="40.5" y="10.5" width="2" height="1.5" fill="#e8e8f0"/><rect x="7.0" y="13.3" width="6" height="12" fill="#4a2020"/><ellipse cx="10.0" cy="17.8" rx="2.2" ry="3" fill="#c89070"/><path d="M7.0 25.3c0-3 1.5-4 3-4s3 1 3 4z" fill="#5a1a20"/><rect x="9.0" y="22.8" width="2" height="1.5" fill="#e8e8f0"/><rect x="13.3" y="13.3" width="6" height="12" fill="#2a1a1a"/><ellipse cx="16.3" cy="17.8" rx="2.2" ry="3" fill="#b07850"/><path d="M13.3 25.3c0-3 1.5-4 3-4s3 1 3 4z" fill="#7a2a2a"/><rect x="15.3" y="22.8" width="2" height="1.5" fill="#e8e8f0"/><rect x="19.6" y="13.3" width="6" height="12" fill="#3a2a20"/><ellipse cx="22.6" cy="17.8" rx="2.2" ry="3" fill="#c89070"/><path d="M19.6 25.3c0-3 1.5-4 3-4s3 1 3 4z" fill="#7a2a2a"/><rect x="21.6" y="22.8" width="2" height="1.5" fill="#e8e8f0"/><rect x="25.9" y="13.3" width="6" height="12" fill="#3a2a20"/><ellipse cx="28.9" cy="17.8" rx="2.2" ry="3" fill="#c89070"/><path d="M25.9 25.3c0-3 1.5-4 3-4s3 1 3 4z" fill="#22305a"/><rect x="27.9" y="22.8" width="2" height="1.5" fill="#e8e8f0"/><rect x="32.2" y="13.3" width="6" height="12" fill="#3a3a20"/><ellipse cx="35.2" cy="17.8" rx="2.2" ry="3" fill="#b07850"/><path d="M32.2 25.3c0-3 1.5-4 3-4s3 1 3 4z" fill="#7a2a2a"/><rect x="34.2" y="22.8" width="2" height="1.5" fill="#e8e8f0"/><rect x="38.5" y="13.3" width="6" height="12" fill="#1a3a3a"/><ellipse cx="41.5" cy="17.8" rx="2.2" ry="3" fill="#8a5a3a"/><path d="M38.5 25.3c0-3 1.5-4 3-4s3 1 3 4z" fill="#22305a"/><rect x="40.5" y="22.8" width="2" height="1.5" fill="#e8e8f0"/><rect x="7.0" y="25.6" width="6" height="12" fill="#1a3a3a"/><ellipse cx="10.0" cy="30.1" rx="2.2" ry="3" fill="#c89070"/><path d="M7.0 37.6c0-3 1.5-4 3-4s3 1 3 4z" fill="#22305a"/><rect x="9.0" y="35.1" width="2" height="1.5" fill="#e8e8f0"/><rect x="13.3" y="25.6" width="6" height="12" fill="#1a3a3a"/><ellipse cx="16.3" cy="30.1" rx="2.2" ry="3" fill="#6a4028"/><path d="M13.3 37.6c0-3 1.5-4 3-4s3 1 3 4z" fill="#22305a"/><rect x="15.3" y="35.1" width="2" height="1.5" fill="#e8e8f0"/><rect x="19.6" y="25.6" width="6" height="12" fill="#4a2020"/><ellipse cx="22.6" cy="30.1" rx="2.2" ry="3" fill="#6a4028"/><path d="M19.6 37.6c0-3 1.5-4 3-4s3 1 3 4z" fill="#5a1a20"/><rect x="21.6" y="35.1" width="2" height="1.5" fill="#e8e8f0"/><rect x="25.9" y="25.6" width="6" height="12" fill="#4a2020"/><ellipse cx="28.9" cy="30.1" rx="2.2" ry="3" fill="#8a5a3a"/><path d="M25.9 37.6c0-3 1.5-4 3-4s3 1 3 4z" fill="#5a1a20"/><rect x="27.9" y="35.1" width="2" height="1.5" fill="#e8e8f0"/><rect x="32.2" y="25.6" width="6" height="12" fill="#2a1a1a"/><ellipse cx="35.2" cy="30.1" rx="2.2" ry="3" fill="#6a4028"/><path d="M32.2 37.6c0-3 1.5-4 3-4s3 1 3 4z" fill="#7a2a2a"/><rect x="34.2" y="35.1" width="2" height="1.5" fill="#e8e8f0"/><rect x="38.5" y="25.6" width="6" height="12" fill="#20202a"/><ellipse cx="41.5" cy="30.1" rx="2.2" ry="3" fill="#6a4028"/><path d="M38.5 37.6c0-3 1.5-4 3-4s3 1 3 4z" fill="#7a2a2a"/><rect x="40.5" y="35.1" width="2" height="1.5" fill="#e8e8f0"/></svg>
<svg style="left:125px;top:649px;" width="51" height="38" viewBox="0 0 51 38"><rect width="51" height="38" fill="#000"/><rect x="10" y="0" width="31" height="38" fill="#7a1424"/><rect x="22.5" y="1.5" width="2" height="3.5" fill="#2040b0"/><rect x="24.5" y="1.5" width="2" height="3.5" fill="#fff"/><rect x="26.5" y="1.5" width="2" height="3.5" fill="#e02030"/><circle cx="16" cy="10" r="1.3" fill="#3a2a2a"/><rect x="13" y="11.5" width="6" height="1.6" fill="#2a5ad0"/><circle cx="25.5" cy="9" r="1.3" fill="#3a2a2a"/><rect x="22.5" y="10.5" width="6" height="1.6" fill="#2a5ad0"/><circle cx="35" cy="10" r="1.3" fill="#3a2a2a"/><rect x="32" y="11.5" width="6" height="1.6" fill="#2a5ad0"/><circle cx="25.5" cy="15" r="1.3" fill="#3a2a2a"/><rect x="22.5" y="16.5" width="6" height="1.6" fill="#2a5ad0"/><circle cx="20" cy="20" r="1.3" fill="#3a2a2a"/><rect x="17" y="21.5" width="6" height="1.6" fill="#2a5ad0"/><circle cx="31" cy="20" r="1.3" fill="#3a2a2a"/><rect x="28" y="21.5" width="6" height="1.6" fill="#2a5ad0"/><circle cx="14" cy="24" r="1.3" fill="#3a2a2a"/><rect x="11" y="25.5" width="6" height="1.6" fill="#2a5ad0"/><circle cx="37" cy="24" r="1.3" fill="#3a2a2a"/><rect x="34" y="25.5" width="6" height="1.6" fill="#2a5ad0"/><circle cx="21" cy="27" r="1.3" fill="#3a2a2a"/><rect x="18" y="28.5" width="6" height="1.6" fill="#2a5ad0"/><circle cx="30" cy="27" r="1.3" fill="#3a2a2a"/><rect x="27" y="28.5" width="6" height="1.6" fill="#2a5ad0"/><rect x="22.5" y="32" width="6" height="2.5" fill="#e0b020"/><circle cx="25.5" cy="36" r="1.2" fill="#c8c8c8"/></svg>
<div style="left:12px;top:714px;width:23px;height:22px;border:1px solid #45474c;border-radius:3px;background:#2b2d32"></div>
<svg style="left:18px;top:720px;" width="11" height="11" viewBox="0 0 11 11"><path d="M1.5 0.5v10M9.5 0.5L3.5 5.5l6 5" fill="none" stroke="#fff" stroke-width="1.7"/></svg>
<div style="left:46px;top:714px;width:23px;height:22px;border:1px solid #45474c;border-radius:3px;background:#2b2d32"></div>
<svg style="left:53px;top:720px;" width="8" height="11" viewBox="0 0 8 11"><path d="M6.5 0.5L1.5 5.5l5 5" fill="none" stroke="#fff" stroke-width="1.7"/></svg>
<div style="left:224.2px;top:720.03px;font-size:9.3px;line-height:9.3px;color:#a8aab0;font-weight:400;white-space:pre;">1</div>
<div style="left:245.8px;top:720.03px;font-size:9.3px;line-height:9.3px;color:#62b4f7;font-weight:700;white-space:pre;">2</div>
<div style="left:268.3px;top:720.03px;font-size:9.3px;line-height:9.3px;color:#62b4f7;font-weight:700;white-space:pre;">3</div>
<div style="left:290.8px;top:720.03px;font-size:9.3px;line-height:9.3px;color:#62b4f7;font-weight:700;white-space:pre;">4</div>
<div style="left:313.3px;top:720.03px;font-size:9.3px;line-height:9.3px;color:#62b4f7;font-weight:700;white-space:pre;">5</div>
<div style="left:328px;top:714px;width:22px;height:22px;background:#75c0ff;border-radius:3px"></div>
<div style="left:335.8px;top:720.03px;font-size:9.3px;line-height:9.3px;color:#1b2230;font-weight:700;white-space:pre;">6</div>
<div style="left:12px;top:744px;width:541px;height:1px;background:#45464b;"></div>
<div style="left:12px;top:757px;width:77px;height:22px;border:1px solid #e0532d;border-radius:3px"></div>
<div style="left:19.4px;top:763.46px;font-size:9.5px;line-height:9.5px;color:#ef5630;font-weight:700;letter-spacing:-0.219px;white-space:pre;">Nouveau sujet</div>
<div style="left:93px;top:757px;width:76px;height:22px;border:1px solid #e0532d;border-radius:3px"></div>
<div style="left:96.5px;top:763.46px;font-size:9.5px;line-height:9.5px;color:#ef5630;font-weight:700;letter-spacing:-0.193px;white-space:pre;">Liste des sujets</div>
<div style="left:490px;top:757px;width:63px;height:22px;border:1px solid #e0532d;border-radius:3px"></div>
<div style="left:499.7px;top:763.46px;font-size:9.5px;line-height:9.5px;color:#ef5630;font-weight:700;letter-spacing:-0.215px;white-space:pre;">Actualiser</div>
<div style="left:12.3px;top:792.96px;font-size:18px;line-height:18px;color:#fff;font-weight:700;letter-spacing:-0.329px;white-space:pre;">Répondre</div>
<div style="left:12px;top:832px;width:541px;height:117px;border:1px solid #4a4c52;border-radius:3px;background:#2b2c31"></div>
<div style="left:13px;top:859.5px;width:539px;height:1px;background:#4a4c52;"></div>
<div style="left:17px;top:836px;width:84px;height:21px;border:1px solid #4a4c52;border-radius:3px"></div>
<div style="left:104px;top:836px;width:104px;height:21px;border:1px solid #4a4c52;border-radius:3px"></div>
<div style="left:210px;top:836px;width:64px;height:21px;border:1px solid #4a4c52;border-radius:3px"></div>
<div style="left:277px;top:836px;width:16px;height:21px;border:1px solid #4a4c52;border-radius:3px"></div>
<div style="left:24px;top:842.22px;font-size:12.5px;line-height:12.5px;color:#a3a5ab;font-weight:700;white-space:pre;">B</div>
<svg style="left:43px;top:839px;" width="11" height="14" viewBox="0 0 11 14"><path d="M4 1h6M1 13h6M7.5 1L3.5 13" fill="none" stroke="#a3a5ab" stroke-width="1.4"/></svg>
<div style="left:64.5px;top:841.64px;font-size:12px;line-height:12px;color:#a3a5ab;font-weight:400;white-space:pre;">U</div>
<div style="left:64.5px;top:853px;width:9px;height:1px;background:#a3a5ab;"></div>
<div style="left:84px;top:842.22px;font-size:12.5px;line-height:12.5px;color:#a3a5ab;font-weight:400;white-space:pre;">S</div>
<div style="left:82px;top:846px;width:14px;height:1px;background:#a3a5ab;"></div>
<svg style="left:108px;top:840px;" width="14" height="13" viewBox="0 0 14 13"><g fill="#a3a5ab"><circle cx="2" cy="2" r="1.6"/><circle cx="2" cy="6.5" r="1.6"/><circle cx="2" cy="11" r="1.6"/><rect x="5" y="1.2" width="9" height="1.5"/><rect x="5" y="5.7" width="9" height="1.5"/><rect x="5" y="10.2" width="9" height="1.5"/></g></svg>
<svg style="left:129px;top:840px;" width="14" height="13" viewBox="0 0 14 13"><g fill="#a3a5ab"><rect x="5" y="1.2" width="9" height="1.5"/><rect x="5" y="5.7" width="9" height="1.5"/><rect x="5" y="10.2" width="9" height="1.5"/><rect x="1" y="0" width="1.5" height="4"/><rect x="0.5" y="5" width="3" height="3"/><rect x="0.5" y="9" width="3" height="4"/></g></svg>
<svg style="left:149px;top:841px;" width="14" height="11" viewBox="0 0 14 11"><g fill="#a3a5ab"><circle cx="3.3" cy="7.6" r="3.1"/><path d="M0.3 7.3C0.3 3.5 2.5 1 5.5 0.6l.4 1.1C4 2.4 2.8 4 2.8 6z"/><circle cx="10.6" cy="7.6" r="3.1"/><path d="M7.6 7.3C7.6 3.5 9.8 1 12.8 0.6l.4 1.1c-1.9.7-3.1 2.3-3.1 4.3z"/></g></svg>
<svg style="left:170px;top:842px;" width="12" height="9" viewBox="0 0 12 9"><path d="M4 0.5L0.8 4.5 4 8.5M8 0.5l3.2 4L8 8.5" fill="none" stroke="#a3a5ab" stroke-width="1.2"/></svg>
<svg style="left:189px;top:839px;" width="14" height="14" viewBox="0 0 14 14"><path d="M1 7c1.5-3 4-4.5 6-4.5S11.5 4 13 7c-1.5 3-4 4.5-6 4.5S2.5 10 1 7z" fill="none" stroke="#a3a5ab" stroke-width="1.2"/><circle cx="7" cy="7" r="2" fill="none" stroke="#a3a5ab" stroke-width="1.2"/><path d="M1.5 13L12.5 1" stroke="#a3a5ab" stroke-width="1.3"/></svg>
<svg style="left:215px;top:839px;" width="13" height="13" viewBox="0 0 13 13"><circle cx="6.5" cy="6.5" r="5.8" fill="none" stroke="#a3a5ab" stroke-width="1.1"/><circle cx="4.5" cy="5" r=".8" fill="#a3a5ab"/><circle cx="8.5" cy="5" r=".8" fill="#a3a5ab"/><path d="M3.5 8c1.5 2 4.5 2 6 0" fill="none" stroke="#a3a5ab" stroke-width="1.1"/></svg>
<svg style="left:235.5px;top:840px;" width="13" height="11" viewBox="0 0 13 11"><rect x="0.5" y="0.5" width="12" height="10" fill="none" stroke="#a3a5ab" stroke-width="1"/><path d="M1 10l4-5 3 3 2-2 2 4z" fill="#a3a5ab"/><circle cx="10" cy="3" r="1" fill="#a3a5ab"/></svg>
<svg style="left:256px;top:840px;" width="13" height="11" viewBox="0 0 13 11"><rect x="0.5" y="0.5" width="12" height="10" fill="none" stroke="#a3a5ab" stroke-width="1"/><path d="M3 0.5v10M10 0.5v10" stroke="#a3a5ab" stroke-width="1"/><path d="M5 3v5l3.5-2.5z" fill="#a3a5ab"/></svg>
<div style="left:282px;top:841.07px;font-size:11.5px;line-height:11.5px;color:#a3a5ab;font-weight:400;white-space:pre;">?</div>
<div style="left:488.7px;top:845.35px;font-size:8.8px;line-height:8.8px;color:#a3a5ab;font-weight:400;letter-spacing:-0.389px;white-space:pre;">PRÉVISU</div>
<div style="left:529px;top:841px;width:19px;height:12px;background:#3d8fe0;border-radius:6px"></div>
<div style="left:538px;top:842px;width:10px;height:10px;border-radius:5px;background:#fff"></div>
<svg style="left:531px;top:844px;" width="6" height="5" viewBox="0 0 6 5"><path d="M0.5 2.5l1.8 1.8L5.5 1" fill="none" stroke="#fff" stroke-width="1.1"/></svg>
<div style="left:13px;top:861px;width:521px;height:86px;overflow:hidden">
<div style="left:7.8px;top:3.11px;font-size:11.8px;line-height:11.8px;color:#ececee;font-weight:400;letter-spacing:-0.21px;white-space:pre;-webkit-text-stroke:0.2px currentColor;">corrélation entre réussite professionnelle et invisibilité auprès des femmes.</div>
<div style="left:7.8px;top:36.51px;font-size:11.8px;line-height:11.8px;color:#ececee;font-weight:400;letter-spacing:-0.098px;white-space:pre;-webkit-text-stroke:0.2px currentColor;">tiens</div>
<div style="left:7.8px;top:53.71px;font-size:11.8px;line-height:11.8px;color:#ececee;font-weight:400;letter-spacing:-0.372px;white-space:pre;-webkit-text-stroke:0.2px currentColor;">paz</div>
</div>
<div style="left:20.7px;top:874.5px;width:53.3px;height:2px;background:repeating-linear-gradient(90deg,#d13a3a 0 1px,transparent 1px 2px)"></div>
<div style="left:77.5px;top:874.5px;width:67.5px;height:2px;background:repeating-linear-gradient(90deg,#d13a3a 0 1px,transparent 1px 2px)"></div>
<div style="left:148px;top:874.5px;width:77px;height:2px;background:repeating-linear-gradient(90deg,#d13a3a 0 1px,transparent 1px 2px)"></div>
<div style="left:240px;top:874.5px;width:49.5px;height:2px;background:repeating-linear-gradient(90deg,#d13a3a 0 1px,transparent 1px 2px)"></div>
<div style="left:292px;top:874.5px;width:34px;height:2px;background:repeating-linear-gradient(90deg,#d13a3a 0 1px,transparent 1px 2px)"></div>
<div style="left:20.7px;top:908px;width:24.3px;height:2px;background:repeating-linear-gradient(90deg,#d13a3a 0 1px,transparent 1px 2px)"></div>
<div style="left:20.7px;top:925px;width:18.3px;height:2px;background:repeating-linear-gradient(90deg,#d13a3a 0 1px,transparent 1px 2px)"></div>
<div style="left:535px;top:861px;width:17px;height:67px;background:#2e2f33;"></div>
<svg style="left:539px;top:866px;" width="9" height="6" viewBox="0 0 9 6"><path d="M0 6l4.5-5 4.5 5z" fill="#e0e0e0"/></svg>
<div style="left:536px;top:890px;width:14px;height:18px;background:#6a6b6f;"></div>
<svg style="left:539px;top:914px;" width="9" height="6" viewBox="0 0 9 6"><path d="M0 0l4.5 5 4.5-5z" fill="#e0e0e0"/></svg>
<div style="left:535px;top:928px;width:17px;height:17px;background:#1c1c1e;"></div>
<div style="left:535px;top:928px;width:17px;height:1px;background:#4a4c52;"></div>
<div style="left:535px;top:928px;width:1px;height:17px;background:#4a4c52;"></div>
<svg style="left:543px;top:936px;" width="8" height="8" viewBox="0 0 8 8"><path d="M7 1L1 7M7 4.5L4.5 7" stroke="#9a9a9a" stroke-width="1"/></svg>
<div style="left:12px;top:957px;width:541px;height:100px;border:1px solid #4a4c52;border-radius:3px;background:#25262b"></div>
<div style="left:32px;top:965px;width:3px;height:80px;background:#1c1d21;"></div>
<div style="left:42.4px;top:976.07px;font-size:11.5px;line-height:11.5px;color:#d8d9dc;font-weight:400;letter-spacing:-0.207px;white-space:pre;-webkit-text-stroke:0.2px currentColor;">Le 28 avril 2023 à 09:09:44 :</div>
<div style="left:42.4px;top:992.77px;font-size:11.5px;line-height:11.5px;color:#d8d9dc;font-weight:400;letter-spacing:-0.195px;white-space:pre;-webkit-text-stroke:0.2px currentColor;">C'est fou quand même, le salaire médian en France c'est 1900€ net, seul 10% de la population est</div>
<div style="left:42.4px;top:1010.07px;font-size:11.5px;line-height:11.5px;color:#d8d9dc;font-weight:400;letter-spacing:-0.152px;white-space:pre;-webkit-text-stroke:0.2px currentColor;">au dessus de 3000€ net. Et bien je crois qu'ils sont tous sur jvc... Je remarque donc qu'il y a une</div>
<div style="left:42.4px;top:1026.87px;font-size:11.5px;line-height:11.5px;color:#d8d9dc;font-weight:400;letter-spacing:-0.08px;white-space:pre;-webkit-text-stroke:0.2px currentColor;">corrélation entre réussite professionnelle et invisibilité auprès des femmes.</div>
<div style="left:0px;top:1039px;width:581px;height:1px;background:#3a3a3a;"></div>
<div style="left:0px;top:1040px;width:1920px;height:40px;background:#1f1e18;"></div>
<svg style="left:16px;top:1052px;" width="17" height="16" viewBox="0 0 17 16"><g fill="#fff"><path d="M0 2.3l7-1v6.4H0z"/><path d="M7.8 1.2L17 0v7.7H7.8z"/><path d="M0 8.4h7v6.4l-7-1z"/><path d="M7.8 8.4H17V16l-9.2-1.2z"/></g></svg>
<svg style="left:64px;top:1051px;" width="22" height="18" viewBox="0 0 22 18"><path d="M0 2a1 1 0 0 1 1-1h6l2 2h12a1 1 0 0 1 1 1v13a1 1 0 0 1-1 1H1a1 1 0 0 1-1-1z" fill="#d9a82b"/><rect y="5" width="22" height="13" rx="1" fill="#f7cf5a"/><path d="M5 18v-6h12v6" fill="#2b8fe0"/><rect x="8" y="14" width="6" height="4" fill="#1a5fa8"/></svg>
<svg style="left:112px;top:1048px;" width="24" height="24" viewBox="0 0 24 24"><circle cx="12" cy="12" r="12" fill="#db4437"/><path d="M12 12L22.4 6A12 12 0 0 0 1.6 6z" fill="#db4437"/><path d="M12 12l10.4-6A12 12 0 0 1 12 24z" fill="#f4c20d"/><path d="M12 12L12 24A12 12 0 0 1 1.6 6z" fill="#0f9d58"/><circle cx="12" cy="12" r="5.5" fill="#fff"/><circle cx="12" cy="12" r="4.3" fill="#4285f4"/></svg>
<div style="left:149px;top:1040px;width:48px;height:40px;background:#3b3a35;"></div>
<svg style="left:162px;top:1049px;" width="22" height="22" viewBox="0 0 22 22"><rect width="22" height="22" rx="4" fill="#b30b00"/><path d="M11 4c-1 0-1 1.5-.5 3.5.8 3 3 7 6.5 8.5 1.5.6 2.5 0 2-1-.7-1.2-4-1-8 0S3 17.5 3.5 18.5c.5 1 2-.3 3.5-3s3-6.5 4-9.5C11.5 4.5 11.8 4 11 4z" fill="none" stroke="#fff" stroke-width="1.5"/></svg>
<svg style="left:210px;top:1048px;" width="24" height="24" viewBox="0 0 24 24"><path d="M12 1.5A10.5 10.5 0 0 0 2.9 17.2L1.5 22.5l5.5-1.4A10.5 10.5 0 1 0 12 1.5z" fill="none" stroke="#9a9a9a" stroke-width="2.2"/><circle cx="12" cy="12" r="8.5" fill="#6b6b6b"/><path d="M8.5 7c.5-.5 1.5-.5 1.8.2l.8 1.8c.2.5 0 .9-.3 1.2l-.6.6c.8 1.6 2 2.8 3.6 3.6l.6-.6c.3-.3.8-.4 1.2-.2l1.8.8c.6.3.7 1.3.2 1.8l-.7.7c-.8.8-2.5.9-4.6-.5S8.3 12.5 7.5 10.500 7 8.2 7.8 7.5z" fill="#fff"/></svg>
<svg style="left:261px;top:1048px;" width="20" height="24" viewBox="0 0 20 24"><path d="M2 4l2-3h12l2 3-.5 3 .5 2.5L17 17l-7 6-7-6-1-7.5.5-2.5z" fill="#fb542b"/><path d="M6 9l4 1.5L14 9l-1.5 5.5-2.5 2-2.5-2z" fill="#fff"/></svg>
<div style="left:55px;top:1078px;width:40px;height:2px;background:#7fb5e6;"></div>
<div style="left:149px;top:1078px;width:48px;height:2px;background:#7fb5e6;"></div>
<div style="left:202px;top:1078px;width:40px;height:2px;background:#7fb5e6;"></div>
<div style="left:251px;top:1078px;width:40px;height:2px;background:#7fb5e6;"></div>
<svg style="left:1472px;top:1050px;" width="26" height="22" viewBox="0 0 26 22"><ellipse cx="13" cy="9" rx="8" ry="6.5" fill="#d8e6f5"/><ellipse cx="7" cy="11.5" rx="6" ry="5" fill="#c2d6ee"/><ellipse cx="19" cy="11.5" rx="6" ry="5" fill="#b6cdea"/><path d="M8 14v6M13 14v7M18 14v6" stroke="#3a8ee6" stroke-width="3" stroke-linecap="round"/></svg>
<div style="left:1504px;top:1053.35px;font-size:14px;line-height:14px;color:#fff;font-weight:400;letter-spacing:-0.481px;white-space:pre;">11°C</div>
<div style="left:1542px;top:1053.35px;font-size:14px;line-height:14px;color:#fff;font-weight:400;letter-spacing:-0.365px;white-space:pre;">Rain showers</div>
<svg style="left:1647px;top:1055px;" width="12" height="7" viewBox="0 0 12 7"><path d="M1 6l5-5 5 5" fill="none" stroke="#fff" stroke-width="1.2"/></svg>
<svg style="left:1668px;top:1052px;" width="19" height="17" viewBox="0 0 19 17"><rect x="1" y="3" width="15" height="11" fill="none" stroke="#fff" stroke-width="1.1" transform="skewY(-10) translate(0 2)"/><path d="M6 10l3-4 3 4" fill="none" stroke="#fff" stroke-width="1"/><circle cx="14.5" cy="14" r="3" fill="#f7941d"/></svg>
<svg style="left:1693px;top:1053px;" width="17" height="14" viewBox="0 0 17 14"><path d="M1 7h3M4 4v6M4 5h3v4H4" fill="none" stroke="#fff" stroke-width="1.1"/><rect x="7" y="3.5" width="9" height="7.5" fill="none" stroke="#fff" stroke-width="1.1"/><rect x="9" y="5.5" width="4" height="3.5" fill="#fff"/></svg>
<svg style="left:1720px;top:1052px;" width="14" height="15" viewBox="0 0 14 15"><path d="M1 14A12 12 0 0 1 13 2M3.5 14A9.5 9.5 0 0 1 13 4.5M6 14a7 7 0 0 1 7-7M8.5 14A4.5 4.5 0 0 1 13 9.5" fill="none" stroke="#fff" stroke-width="1" opacity=".9"/><circle cx="12" cy="13" r="1.2" fill="#fff"/></svg>
<svg style="left:1741px;top:1052px;" width="18" height="16" viewBox="0 0 18 16"><path d="M1 5h3l4-4v14l-4-4H1z" fill="none" stroke="#fff" stroke-width="1.1"/><path d="M11 5a4 4 0 0 1 0 6M13.5 3a7 7 0 0 1 0 10M16 1.5a9.5 9.5 0 0 1 0 13" fill="none" stroke="#fff" stroke-width="1"/></svg>
<div style="left:1767.2px;top:1045.54px;font-size:12px;line-height:12px;color:#fff;font-weight:400;letter-spacing:-1.502px;white-space:pre;">ENG</div>
<div style="left:1772px;top:1063.24px;font-size:12px;line-height:12px;color:#fff;font-weight:400;letter-spacing:-3.195px;white-space:pre;">FR</div>
<div style="left:1817px;top:1045.54px;font-size:12px;line-height:12px;color:#fff;font-weight:400;letter-spacing:-0.507px;white-space:pre;">09:13</div>
<div style="left:1803px;top:1062.84px;font-size:12px;line-height:12px;color:#fff;font-weight:400;letter-spacing:-0.262px;white-space:pre;">28/04/2023</div>
<svg style="left:1878px;top:1051px;" width="18" height="19" viewBox="0 0 18 19"><path d="M1.5 1.5h15v11h-5.5l-2 2.5-2-2.5H1.5z" fill="none" stroke="#fff" stroke-width="1.3"/></svg>
<div style="left:1915px;top:1040px;width:1px;height:40px;background:#7a7a72;"></div></body></html>
